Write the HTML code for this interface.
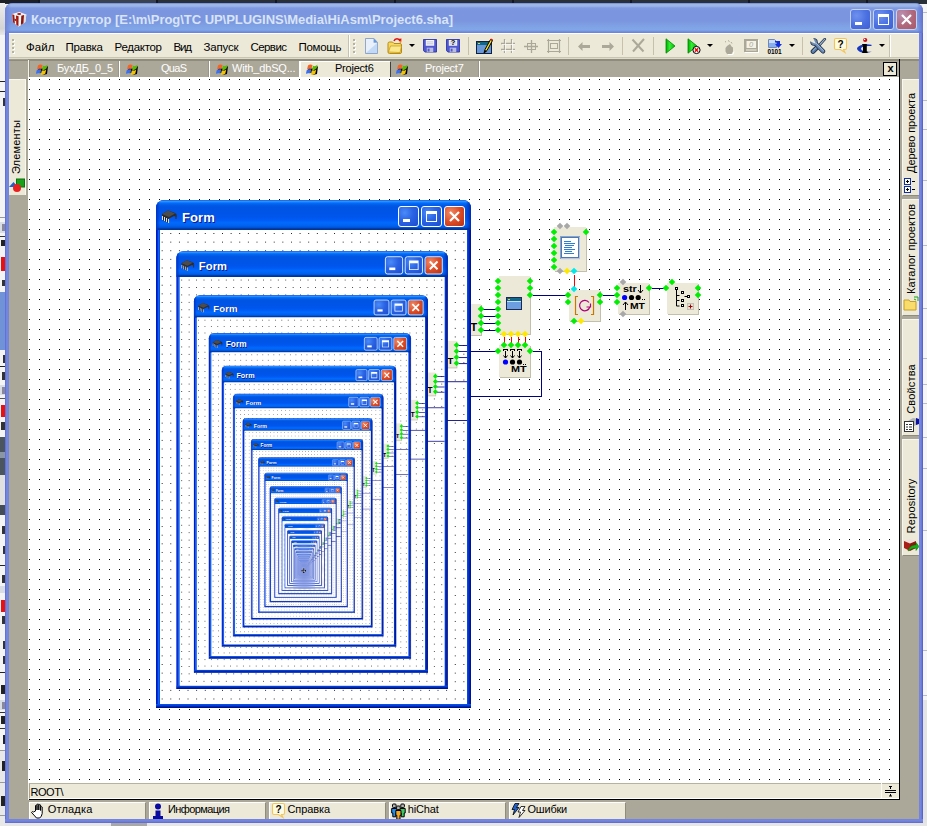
<!DOCTYPE html><html><head><meta charset="utf-8"><title>HiAsm</title><style>
*{box-sizing:border-box;margin:0;padding:0}
html,body{width:927px;height:826px;overflow:hidden;background:#f4f4f4}
body{position:relative;font-family:"Liberation Sans",sans-serif;font-size:11px;color:#000}
.a{position:absolute}
.dots{background-color:#fff;background-image:linear-gradient(90deg,transparent 0,transparent 1px,#fff 1px,#fff 10px),linear-gradient(180deg,#000 0,#000 1px,#fff 1px,#fff 10px);background-size:10px 10px}
.scene{position:absolute;left:0;top:0;width:927px;height:826px}
.sub{position:absolute;left:-160px;top:-230px;width:927px;height:826px;transform-origin:303.5px 570.6px;transform:scale(0.862)}
.fw{position:absolute;left:156px;top:200px;width:315px;height:508px;border-radius:8px 8px 0 0;background:linear-gradient(90deg,#0019c8 0,#0019c8 1px,#0032dc 1px,#0032dc 2px,#1264f0 2px,#1264f0 3px,#0a52e6 3px,#0a52e6 4px,#0a44e2 4px,#0a44e2 312px,#0034d2 312px,#0034d2 313px,#0022aa 313px,#0022aa 314px,#00128a 314px);overflow:hidden}
.ft{position:absolute;left:0;top:0;width:315px;height:30px;background:linear-gradient(180deg,#0058ee 0%,#3593ff 4%,#288eff 6%,#127dff 8%,#036ffc 10%,#0262ee 14%,#0057e5 20%,#0054e3 24%,#0055eb 56%,#005bf5 66%,#026afe 76%,#0062ef 86%,#0052d6 92%,#0040ab 94%,#003092 100%)}
.ftl{position:absolute;left:0;top:0;width:4px;height:30px;background:linear-gradient(90deg,#0033c8,rgba(0,60,220,0))}
.ftr{position:absolute;right:0;top:0;width:5px;height:30px;background:linear-gradient(270deg,#0029b0,rgba(0,60,220,0))}
.fb{position:absolute;left:0;top:504px;width:315px;height:4px;background:linear-gradient(180deg,#0a50e8 0,#0a50e8 1px,#0040dc 1px,#0040dc 2px,#0026b4 2px,#0026b4 3px,#00128a 3px)}
.fc{position:absolute;left:160px;top:230px;width:307px;height:474px;overflow:hidden;background:#fff}
.ftx{position:absolute;left:26px;top:10px;font:bold 13px "Liberation Sans",sans-serif;color:#fff;text-shadow:1px 1px 0 #0a1883;letter-spacing:0.1px;white-space:nowrap}
.cb{position:absolute;top:6px;width:21px;height:21px;border:1px solid #fff;border-radius:3px;background:radial-gradient(circle at 30% 30%,#4a8bf8 0,#2a63e4 45%,#1c4ccc 100%)}
.cb.x{background:radial-gradient(circle at 30% 30%,#ef8a66 0,#dc4c27 50%,#b8300f 100%)}
.el{position:absolute;background:#ece9d8;box-shadow:1px 1px 0 #c2bfad}
.w{position:absolute;background:#000080}
.r{position:absolute;background:#f00}
.d{position:absolute;width:6px;height:6px;margin:-3px 0 0 -3px;transform:rotate(45deg) scale(0.78);background:#0e0}
.d.y{background:#ffe800}.d.g{background:#a8a8a8}.d.c{background:#00e8e8}
.tx{position:absolute;white-space:nowrap}
</style></head><body><div class="a" style="left:0;top:0;width:927px;height:4px;background:#2a3038"></div><div class="a" style="left:0;top:0;width:38px;height:3px;background:#1c1f26"></div><div class="a" style="left:38px;top:0;width:2px;height:3px;background:#14181e"></div><div class="a" style="left:156px;top:0;width:2px;height:3px;background:#14181e"></div><div class="a" style="left:275px;top:0;width:2px;height:3px;background:#14181e"></div><div class="a" style="left:394px;top:0;width:2px;height:3px;background:#14181e"></div><div class="a" style="left:512px;top:0;width:2px;height:3px;background:#14181e"></div><div class="a" style="left:630px;top:0;width:2px;height:3px;background:#14181e"></div><div class="a" style="left:748px;top:0;width:2px;height:3px;background:#14181e"></div><div class="a" style="left:866px;top:0;width:2px;height:3px;background:#14181e"></div><div class="a" style="left:40px;top:0;width:116px;height:3px;background:#3a4252"></div><div class="a" style="left:0;top:823px;width:927px;height:3px;background:#e6e6e6"></div><div class="a" style="left:111px;top:823px;width:36px;height:3px;background:#a8a8a8"></div><div class="a" style="left:0;top:4px;width:5px;height:819px;background:#f4f4f4"></div><div class="a" style="left:0;top:3px;width:5px;height:32px;background:linear-gradient(180deg,#ececec,#d4d4d4 80%,#e8e8e8)"></div><div class="a" style="left:0px;top:81px;width:5px;height:1px;background:#222"></div><div class="a" style="left:0px;top:91px;width:5px;height:1px;background:#222"></div><div class="a" style="left:3px;top:98px;width:2px;height:8px;background:#333"></div><div class="a" style="left:0px;top:217px;width:5px;height:1px;background:#999"></div><div class="a" style="left:0px;top:222px;width:5px;height:11px;background:#d8dce4"></div><div class="a" style="left:2px;top:224px;width:3px;height:7px;background:#889"></div><div class="a" style="left:0px;top:236px;width:5px;height:1px;background:#333"></div><div class="a" style="left:1px;top:240px;width:4px;height:6px;background:#222"></div><div class="a" style="left:1px;top:257px;width:4px;height:14px;background:#e81010"></div><div class="a" style="left:2px;top:280px;width:3px;height:6px;background:#333"></div><div class="a" style="left:0px;top:292px;width:5px;height:58px;background:#6f93d6"></div><div class="a" style="left:3px;top:355px;width:2px;height:8px;background:#333"></div><div class="a" style="left:0px;top:366px;width:5px;height:1px;background:#222"></div><div class="a" style="left:2px;top:372px;width:3px;height:8px;background:#333"></div><div class="a" style="left:0px;top:385px;width:5px;height:10px;background:#d8dce4"></div><div class="a" style="left:2px;top:387px;width:3px;height:7px;background:#889"></div><div class="a" style="left:0px;top:398px;width:5px;height:1px;background:#555"></div><div class="a" style="left:1px;top:405px;width:4px;height:12px;background:#e81010"></div><div class="a" style="left:1px;top:422px;width:4px;height:8px;background:#333"></div><div class="a" style="left:0px;top:437px;width:5px;height:38px;background:#4a5560"></div><div class="a" style="left:0px;top:452px;width:5px;height:6px;background:#8a96a4"></div><div class="a" style="left:0px;top:475px;width:5px;height:30px;background:#e0e0e0"></div><div class="a" style="left:0px;top:505px;width:5px;height:10px;background:#444c58"></div><div class="a" style="left:2px;top:526px;width:3px;height:8px;background:#333"></div><div class="a" style="left:3px;top:546px;width:2px;height:8px;background:#333"></div><div class="a" style="left:0px;top:565px;width:5px;height:1px;background:#222"></div><div class="a" style="left:2px;top:575px;width:3px;height:8px;background:#333"></div><div class="a" style="left:0px;top:586px;width:5px;height:7px;background:#d8dce4"></div><div class="a" style="left:1px;top:600px;width:4px;height:12px;background:#e81010"></div><div class="a" style="left:2px;top:616px;width:3px;height:8px;background:#333"></div><div class="a" style="left:3px;top:641px;width:2px;height:8px;background:#333"></div><div class="a" style="left:3px;top:656px;width:2px;height:8px;background:#333"></div><div class="a" style="left:0px;top:672px;width:5px;height:1px;background:#222"></div><div class="a" style="left:1px;top:685px;width:4px;height:9px;background:#222"></div><div class="a" style="left:0px;top:700px;width:5px;height:10px;background:#d8dce4"></div><div class="a" style="left:2px;top:702px;width:3px;height:7px;background:#889"></div><div class="a" style="left:0px;top:712px;width:5px;height:1px;background:#333"></div><div class="a" style="left:1px;top:716px;width:4px;height:8px;background:#222"></div><div class="a" style="left:0px;top:728px;width:5px;height:1px;background:#333"></div><div class="a" style="left:3px;top:735px;width:2px;height:9px;background:#222"></div><div class="a" style="left:0px;top:750px;width:5px;height:76px;background:#e8e8e8"></div><div class="a" style="left:0px;top:750px;width:5px;height:1px;background:#999"></div><div class="a" style="left:2px;top:761px;width:3px;height:10px;background:#222"></div><div class="a" style="left:0px;top:782px;width:5px;height:1px;background:#999"></div><div class="a" style="left:1px;top:796px;width:4px;height:10px;background:#222"></div><div class="a" style="left:0px;top:815px;width:5px;height:1px;background:#999"></div><div class="a" style="left:923px;top:4px;width:4px;height:819px;background:#f6f6f6"></div><div class="a" style="left:923px;top:12px;width:4px;height:1px;background:#b8bcc4"></div><div class="a" style="left:923px;top:100px;width:4px;height:1px;background:#b8bcc4"></div><div class="a" style="left:923px;top:129px;width:4px;height:1px;background:#b8bcc4"></div><div class="a" style="left:923px;top:180px;width:4px;height:1px;background:#b8bcc4"></div><div class="a" style="left:923px;top:245px;width:4px;height:1px;background:#b8bcc4"></div><div class="a" style="left:923px;top:308px;width:4px;height:1px;background:#b8bcc4"></div><div class="a" style="left:923px;top:358px;width:4px;height:1px;background:#b8bcc4"></div><div class="a" style="left:923px;top:384px;width:4px;height:1px;background:#b8bcc4"></div><div class="a" style="left:923px;top:403px;width:4px;height:1px;background:#b8bcc4"></div><div class="a" style="left:923px;top:437px;width:4px;height:1px;background:#b8bcc4"></div><div class="a" style="left:923px;top:468px;width:4px;height:1px;background:#b8bcc4"></div><div class="a" style="left:923px;top:530px;width:4px;height:1px;background:#b8bcc4"></div><div class="a" style="left:923px;top:650px;width:4px;height:1px;background:#b8bcc4"></div><div class="a" style="left:923px;top:695px;width:4px;height:1px;background:#b8bcc4"></div><div class="a" style="left:923px;top:745px;width:4px;height:1px;background:#b8bcc4"></div><div class="a" style="left:923px;top:790px;width:4px;height:1px;background:#b8bcc4"></div><div class="a" style="left:923px;top:815px;width:4px;height:1px;background:#b8bcc4"></div><div class="a" style="left:923px;top:700px;width:4px;height:123px;background:#e4e4e4"></div><div class="a" style="left:5px;top:3px;width:918px;height:820px;border-radius:8px 8px 0 0;background:linear-gradient(90deg,#5563cb 0,#6f80dc 1px,#7488e0 2px,#7284de 4px,#7284de 914px,#7486e0 916px,#6470d4 917px,#4c56c6 918px);overflow:hidden"><div class="a" style="left:0;top:0;width:918px;height:30px;background:linear-gradient(180deg,#6b86db 0,#9db6ea 1.5px,#9db6ea 3px,#7f9ae1 5px,#7b96df 8px,#7b96df 18px,#80a3e5 24px,#81a7e7 27px,#7089da 29px,#6c82d6 30px)"></div><div class="a" style="left:0;top:0;width:6px;height:30px;background:linear-gradient(90deg,#6f84d8,rgba(120,150,225,0))"></div><div class="a" style="left:912px;top:0;width:6px;height:30px;background:linear-gradient(270deg,#6272d0,rgba(120,150,225,0))"></div><div class="a" style="left:0;top:816px;width:918px;height:4px;background:linear-gradient(180deg,#7284de,#7486e0 2px,#6a74d6 3px,#5f68cc 4px)"></div></div><svg class="a" style="left:11.800px;top:11.600px" width="15" height="15" viewBox="0 0 15 15"><path d="M0 2L7.300 0L14.300 2.400L13.400 10.100L6.500 14.500L1.100 10.600z" fill="#f6f2f2"/><path d="M7.300 4.100L14.300 2.400L13.400 10.100L6.500 14.500z" fill="#e4dede"/><path d="M7.300 4.100L9.300 3.600L8.800 13L6.500 14.500z" fill="#fbf8f8"/><ellipse cx="7.200" cy="1.900" rx="2" ry="1" fill="#a01810"/><path d="M0.200 2.300L2.300 2.900L2.900 11.800L1.100 10.600z" fill="#a01810"/><path d="M4 3.400L6.600 4.200L6.400 14.300L4.300 12.800z" fill="#a01810"/><path d="M2.300 6.500L4.200 7.200L4.200 9.200L2.500 8.500z" fill="#a01810"/><path d="M9.300 3.700L12 3L11.400 11.300L8.900 12.900z" fill="#8c140c"/></svg><div class="tx" style="left:31px;top:12px;font:bold 13px/16px 'Liberation Sans',sans-serif;color:#d8e4f8;letter-spacing:-0.045px;">Конструктор [E:\m\Prog\TC UP\PLUGINS\Media\HiAsm\Project6.sha]</div><div class="a" style="left:850px;top:9px;width:21px;height:21px;border:1px solid #c4d2f4;border-radius:3px;background:radial-gradient(circle at 30% 30%,#6f92ee 0,#4a6fe0 55%,#3f5fd2 100%)"><i class="a" style="left:4px;top:12px;width:7px;height:3px;background:#fff"></i></div><div class="a" style="left:873px;top:9px;width:21px;height:21px;border:1px solid #c4d2f4;border-radius:3px;background:radial-gradient(circle at 30% 30%,#6f92ee 0,#4a6fe0 55%,#3f5fd2 100%)"><i class="a" style="left:4px;top:4px;width:11px;height:11px;border:1px solid #fff;border-top-width:3px"></i></div><div class="a" style="left:896px;top:9px;width:21px;height:21px;border:1px solid #c4d2f4;border-radius:3px;background:radial-gradient(circle at 25% 25%,#b98fb0 0,#b0687c 55%,#a85868 100%)"><svg class="a" style="left:0;top:0" width="19" height="19" viewBox="0 0 19 19"><path d="M5 5l9 9M14 5l-9 9" stroke="#fff" stroke-width="2.200"/></svg></div><div class="a" style="left:9px;top:33px;width:910px;height:786px;background:#aca899"></div><div class="a" style="left:9px;top:33px;width:910px;height:26px;background:#ece9d8;border-top:1px solid #fff"></div><div class="a" style="left:9px;top:57px;width:910px;height:1px;background:#c8c5b3"></div><div class="a" style="left:9px;top:58px;width:910px;height:1px;background:#dedbc9"></div><div class="a" style="left:9px;top:59px;width:910px;height:2px;background:#8f8c7d"></div><div class="a" style="left:9px;top:59px;width:19px;height:1px;background:#a09d8e"></div><i class="a" style="left:12px;top:39px;width:2px;height:2px;background:#b5b29f;box-shadow:1px 1px 0 #fff"></i><i class="a" style="left:12px;top:43px;width:2px;height:2px;background:#b5b29f;box-shadow:1px 1px 0 #fff"></i><i class="a" style="left:12px;top:47px;width:2px;height:2px;background:#b5b29f;box-shadow:1px 1px 0 #fff"></i><i class="a" style="left:12px;top:51px;width:2px;height:2px;background:#b5b29f;box-shadow:1px 1px 0 #fff"></i><i class="a" style="left:353px;top:39px;width:2px;height:2px;background:#b5b29f;box-shadow:1px 1px 0 #fff"></i><i class="a" style="left:353px;top:43px;width:2px;height:2px;background:#b5b29f;box-shadow:1px 1px 0 #fff"></i><i class="a" style="left:353px;top:47px;width:2px;height:2px;background:#b5b29f;box-shadow:1px 1px 0 #fff"></i><i class="a" style="left:353px;top:51px;width:2px;height:2px;background:#b5b29f;box-shadow:1px 1px 0 #fff"></i><div class="tx" style="left:26px;top:40px;font:11.5px/14px 'Liberation Sans',sans-serif;color:#000;letter-spacing:0.076px;">Файл</div><div class="tx" style="left:65.5px;top:40px;font:11.5px/14px 'Liberation Sans',sans-serif;color:#000;letter-spacing:-0.269px;">Правка</div><div class="tx" style="left:114.5px;top:40px;font:11.5px/14px 'Liberation Sans',sans-serif;color:#000;letter-spacing:-0.286px;">Редактор</div><div class="tx" style="left:173.5px;top:40px;font:11.5px/14px 'Liberation Sans',sans-serif;color:#000;letter-spacing:-1.152px;">Вид</div><div class="tx" style="left:203.5px;top:40px;font:11.5px/14px 'Liberation Sans',sans-serif;color:#000;letter-spacing:-0.194px;">Запуск</div><div class="tx" style="left:250.5px;top:40px;font:11.5px/14px 'Liberation Sans',sans-serif;color:#000;letter-spacing:-0.576px;">Сервис</div><div class="tx" style="left:298.5px;top:40px;font:11.5px/14px 'Liberation Sans',sans-serif;color:#000;letter-spacing:-0.283px;">Помощь</div><i class="a" style="left:348px;top:35px;width:1px;height:22px;background:#c5c2b2"></i><i class="a" style="left:349px;top:35px;width:1px;height:22px;background:#fff"></i><i class="a" style="left:468px;top:37px;width:1px;height:18px;background:#c5c1ad"></i><i class="a" style="left:568px;top:37px;width:1px;height:18px;background:#c5c1ad"></i><i class="a" style="left:622px;top:37px;width:1px;height:18px;background:#c5c1ad"></i><i class="a" style="left:653px;top:37px;width:1px;height:18px;background:#c5c1ad"></i><i class="a" style="left:802px;top:37px;width:1px;height:18px;background:#c5c1ad"></i><i class="a" style="left:889px;top:35px;width:1px;height:22px;background:#c5c2b2"></i><i class="a" style="left:890px;top:35px;width:1px;height:22px;background:#fff"></i><svg class="a" style="left:365px;top:38px" width="13" height="16" viewBox="0 0 14 16" preserveAspectRatio="none"><path d="M.5.500h9l4 4v11H.5z" fill="#e8f0fb" stroke="#8aa0c8"/><path d="M1 15L13 5v10z" fill="#b8d4f4" opacity=".8"/><path d="M9.500.500v4h4z" fill="#5a9ae8" stroke="#8aa0c8" stroke-width=".5"/></svg><svg class="a" style="left:387px;top:37px" width="17" height="17" viewBox="0 0 17 17"><path d="M7 4c1-3 5-3 6 0" stroke="#e01010" stroke-width="1.500" fill="none"/><path d="M11 2l3.500-.5-.5 4z" fill="#e01010"/><path d="M12 5l2 1 .500-3" fill="#f08020"/><path d="M1 6.500q0-1.500 1.500-1.500h3l1.500 1.500h6q1.500 0 1.500 1.500V15q0 1.500-1.500 1.500h-10.500Q1 16.500 1 15z" fill="#f6d860" stroke="#b88a10"/><path d="M1.500 15l2-6h11l-1.500 6.500z" fill="#fbe88c" stroke="#b88a10" stroke-width=".6"/></svg><svg class="a" style="left:408.5px;top:44px" width="6" height="3" viewBox="0 0 6 3"><path d="M0 0h6L3 3z"/></svg><svg class="a" style="left:707px;top:44px" width="6" height="3" viewBox="0 0 6 3"><path d="M0 0h6L3 3z"/></svg><svg class="a" style="left:789px;top:44px" width="6" height="3" viewBox="0 0 6 3"><path d="M0 0h6L3 3z"/></svg><svg class="a" style="left:879px;top:44px" width="6" height="3" viewBox="0 0 6 3"><path d="M0 0h6L3 3z"/></svg><svg class="a" style="left:423px;top:39px" width="14" height="13.500" viewBox="0 0 15 14" preserveAspectRatio="none"><path d="M.5.500h14v13H2L.5 12z" fill="#5058d0" stroke="#3038a8"/><rect x="3" y="1" width="9" height="6" fill="#f4f4fa"/><path d="M4 3h7M4 5h7" stroke="#c0c4d8"/><rect x="4" y="9" width="7" height="4.500" fill="#b8bce0"/><rect x="5" y="10" width="2" height="3" fill="#5058d0"/></svg><svg class="a" style="left:446px;top:39px" width="14" height="13.500" viewBox="0 0 15 14" preserveAspectRatio="none"><path d="M.5.500h14v13H2L.5 12z" fill="#5058d0" stroke="#3038a8"/><rect x="3" y="1" width="9" height="6" fill="#f4f4fa"/><path d="M4 3h7M4 5h7" stroke="#c0c4d8"/><rect x="4" y="9" width="7" height="4.500" fill="#b8bce0"/><rect x="5" y="10" width="2" height="3" fill="#5058d0"/><text x="5" y="6.500" font-size="8" font-weight="bold" font-family="Liberation Sans, sans-serif">?</text></svg><svg class="a" style="left:476px;top:38px" width="17" height="16" viewBox="0 0 17 16"><rect x=".5" y="3.500" width="15" height="12" fill="#6898d8" stroke="#102040"/><rect x="1" y="4" width="14" height="3" fill="#106888"/><rect x="2" y="5" width="2" height="1" fill="#e8d040"/><path d="M8 15l1-3.500L14.500 1.500l2 1L11 12.500z" fill="#f8e020" stroke="#000" stroke-width="1"/><path d="M14 1.500l1-1 2 1-.800 1.300z" fill="#e01010"/><path d="M8 15l1-3 1.800 1.200z" fill="#000"/></svg><svg class="a" style="left:500px;top:38px" width="16" height="16" viewBox="0 0 16 16"><path d="M4.500 1v14M11.500 1v14M1 5.500h14M1 11.500h14" stroke="#aca899" stroke-width="1.300" fill="none"/><path d="M5.500 2v13M12.500 2v13M2 6.500h13M2 12.500h13" stroke="#fff" stroke-width=".8" fill="none" opacity=".9"/></svg><svg class="a" style="left:523px;top:38px" width="16" height="16" viewBox="0 0 16 16"><path d="M8.500 2v13M1 8.500h14" stroke="#aca899" stroke-width="1.300" fill="none"/><rect x="4.500" y="5.500" width="8" height="6" fill="none" stroke="#aca899"/></svg><svg class="a" style="left:546px;top:38px" width="16" height="16" viewBox="0 0 16 16"><path d="M2.500 1v14M13.500 1v14M1 2.500h14M1 13.500h14" stroke="#aca899" stroke-width="1.200" fill="none"/><rect x="4.500" y="5.500" width="7" height="5" fill="none" stroke="#aca899"/></svg><svg class="a" style="left:578px;top:42px" width="12" height="9" viewBox="0 0 12 9"><path d="M0 4.500L4.500 0v3H12v3H4.500v3z" fill="#aca899"/></svg><svg class="a" style="left:602px;top:42px" width="12" height="9" viewBox="0 0 12 9"><path d="M12 4.500L7.500 0v3H0v3h7.500v3z" fill="#aca899"/></svg><svg class="a" style="left:631px;top:38px" width="15" height="15" viewBox="0 0 15 15"><path d="M1.500 1.500l11 12M13 1L2 13.500" stroke="#aca899" stroke-width="2" fill="none"/></svg><svg class="a" style="left:665px;top:38px" width="11" height="16" viewBox="0 0 11 16"><defs><linearGradient id="pg" x1="0" x2="1"><stop offset="0" stop-color="#0a0"/><stop offset=".4" stop-color="#3e3"/><stop offset="1" stop-color="#0b0"/></linearGradient></defs><path d="M1 .800L10 8 1 15.200z" fill="url(#pg)" stroke="#080" stroke-width=".8"/></svg><svg class="a" style="left:687px;top:38px" width="15" height="17" viewBox="0 0 15 17"><path d="M1 .800L10 8 1 15.200z" fill="url(#pg)" stroke="#080" stroke-width=".8"/><circle cx="9.500" cy="12" r="3.600" fill="#fff" stroke="#000" stroke-width="1"/><path d="M7.800 10.300l3.400 3.400M11.200 10.300l-3.400 3.400" stroke="#e00" stroke-width="1.300"/></svg><svg class="a" style="left:723px;top:39px" width="12" height="16" viewBox="0 0 12 16"><path d="M2 2.500l1 .5M5 1.500l1.500 1M8 3l1 1.500" stroke="#aca899"/><path d="M4 7l3-2 1.500 2.500 1.500 1v4L8.500 15H4L2.500 12.500V9z" fill="#aca899"/><path d="M5 15.500h5l1-3" stroke="#fff" fill="none"/></svg><svg class="a" style="left:744px;top:39px" width="16" height="15" viewBox="0 0 16 15"><rect x="1" y="1" width="14" height="13" fill="#fff"/><rect x="0" y="0" width="14" height="13" fill="#aca899"/><rect x="2.500" y="2" width="9.500" height="7" fill="#f4f2e6"/><rect x="2" y="10.500" width="10.500" height="1" fill="#f4f2e6"/><text x="5" y="8.300" font-size="7.500" font-style="italic" font-family="Liberation Sans, sans-serif" fill="#aca899">0</text></svg><svg class="a" style="left:767px;top:38px" width="17" height="17" viewBox="0 0 17 17"><path d="M1.500 1.500h6l2 2v6h-8z" fill="#c8dcf8" stroke="#7088b8"/><path d="M2 5h7v4H2z" fill="#88b0f0"/><path d="M8 3h5v3h2l-3.500 4L8 6h2V4.500H8z" fill="#1030e0"/><text x="0.500" y="16" font-size="6.500" font-weight="bold" font-family="Liberation Sans, sans-serif" textLength="14">0101</text></svg><svg class="a" style="left:810px;top:38px" width="17" height="16" viewBox="0 0 17 16"><g stroke-linecap="round"><path d="M14.800 1.200L9 7.500" stroke="#203048" stroke-width="2.600"/><path d="M14.800 1.200L9 7.500" stroke="#9ab4d0" stroke-width="1.200"/><path d="M7.500 9L3 13.500" stroke="#203048" stroke-width="4.600"/><path d="M7.500 9L3 13.500" stroke="#5a7ca8" stroke-width="3"/><path d="M6.500 9.200L3 12.600" stroke="#9cb8d8" stroke-width="1"/><path d="M5.500 5.500L13 13.300" stroke="#203048" stroke-width="4.400"/><circle cx="4" cy="4" r="3.700" fill="#203048" stroke="none"/><circle cx="4" cy="4" r="2.900" fill="#6c8cb8" stroke="none"/><path d="M5.500 5.500L13 13.300" stroke="#6c8cb8" stroke-width="2.800"/><path d="M6 5L13.300 12.500" stroke="#a8c0dc" stroke-width=".9"/></g><path d="M4.200 4.200L0.500 2.500L2.500 0.500z" fill="#ece9d8" stroke="#ece9d8" stroke-width="1.600"/></svg><svg class="a" style="left:833px;top:37px" width="15" height="17" viewBox="0 0 15 17"><path d="M3 1.500h9q1.500 0 1.500 1.500v8q0 1.500-1.500 1.500h-1.500l1.500 3-4.500-3H3q-1.500 0-1.500-1.500V3q0-1.500 1.500-1.500z" fill="#fffbe2" stroke="#f2c45c" stroke-width="1.100"/><text x="4.500" y="11" font-size="10" font-weight="bold" font-family="Liberation Sans, sans-serif">?</text></svg><svg class="a" style="left:856px;top:37px" width="17" height="18" viewBox="0 0 17 18"><path d="M15.500 7.800C9 6 1.500 8.300 1 11.500C1.500 15.200 9 17.200 15.800 14.800C11.500 15 5.200 14.200 5 11.700C5 9.600 10.500 8.600 15.500 9z" fill="#1838c0"/><path d="M7 7h3.800v8H7z" fill="#000"/><path d="M6.200 7h2v1.200h-2zM6.200 14.500h5.400V16H6.200z" fill="#000"/><circle cx="9.200" cy="3" r="2.100" fill="#c8101c"/><circle cx="8.600" cy="2.400" r=".7" fill="#fff"/></svg><div class="a" style="left:28px;top:60px;width:1px;height:740px;background:#f4f2e8"></div><div class="a" style="left:29px;top:61px;width:870px;height:16px;background:#aca899"></div><i class="a" style="left:119px;top:61px;width:1px;height:16px;background:#fff"></i><i class="a" style="left:118px;top:61px;width:1px;height:16px;background:#9a9788"></i><i class="a" style="left:209px;top:61px;width:1px;height:16px;background:#fff"></i><i class="a" style="left:208px;top:61px;width:1px;height:16px;background:#9a9788"></i><i class="a" style="left:479px;top:61px;width:1px;height:16px;background:#fff"></i><i class="a" style="left:478px;top:61px;width:1px;height:16px;background:#9a9788"></i><i class="a" style="left:29px;top:61px;width:1px;height:16px;background:#8f8c7d"></i><div class="a" style="left:299px;top:61px;width:92px;height:16px;background:#ece9d8;border-left:2px solid #fff;border-top:1px solid #fff;border-right:1px solid #404040"></div><svg class="a" style="left:36px;top:64px" width="13" height="12" viewBox="0 0 13 12"><path d="M1.5 8.500l1-4.500 4.500.5-1 4.500z" fill="#000"/><path d="M6.500 11l1-5 4.500-4-1 8z" fill="#000"/><path d="M2 1.500c1.500-1.500 3.500-1 4.500-.5l-1 4c-1.500-.5-3-.5-4.500.5z" fill="#f26522"/><path d="M7 1.800c1.500.8 3 .3 4.500-1.300l-1 4c-1.500 1.500-3 1.500-4.500 1z" fill="#5cb800"/><path d="M.8 6c1.500-1 3-1 4.500-.5l-1 4c-1.500-.5-3-.5-4.500.5z" fill="#3a6ff0"/><path d="M5.800 6.500c1.500.6 3 .5 4.500-1l-1 4c-1.500 1.500-3 1.500-4.500 1z" fill="#f5c400"/></svg><div class="tx" style="left:57px;top:62px;font:11px/13px 'Liberation Sans',sans-serif;color:#fff;letter-spacing:-0.139px;">БухДБ_0_5</div><svg class="a" style="left:126px;top:64px" width="13" height="12" viewBox="0 0 13 12"><path d="M1.5 8.500l1-4.500 4.500.5-1 4.500z" fill="#000"/><path d="M6.500 11l1-5 4.500-4-1 8z" fill="#000"/><path d="M2 1.500c1.500-1.500 3.500-1 4.500-.5l-1 4c-1.500-.5-3-.5-4.500.5z" fill="#f26522"/><path d="M7 1.800c1.500.8 3 .3 4.500-1.300l-1 4c-1.500 1.500-3 1.500-4.500 1z" fill="#5cb800"/><path d="M.8 6c1.500-1 3-1 4.500-.5l-1 4c-1.500-.5-3-.5-4.500.5z" fill="#3a6ff0"/><path d="M5.800 6.500c1.500.6 3 .5 4.500-1l-1 4c-1.500 1.500-3 1.500-4.500 1z" fill="#f5c400"/></svg><div class="tx" style="left:161px;top:62px;font:11px/13px 'Liberation Sans',sans-serif;color:#fff;letter-spacing:-0.709px;">QuaS</div><svg class="a" style="left:216px;top:64px" width="13" height="12" viewBox="0 0 13 12"><path d="M1.5 8.500l1-4.500 4.500.5-1 4.500z" fill="#000"/><path d="M6.500 11l1-5 4.500-4-1 8z" fill="#000"/><path d="M2 1.500c1.500-1.500 3.500-1 4.500-.5l-1 4c-1.500-.5-3-.5-4.500.5z" fill="#f26522"/><path d="M7 1.800c1.500.8 3 .3 4.500-1.300l-1 4c-1.500 1.500-3 1.500-4.500 1z" fill="#5cb800"/><path d="M.8 6c1.500-1 3-1 4.500-.5l-1 4c-1.500-.5-3-.5-4.500.5z" fill="#3a6ff0"/><path d="M5.800 6.500c1.500.6 3 .5 4.500-1l-1 4c-1.500 1.500-3 1.500-4.500 1z" fill="#f5c400"/></svg><div class="tx" style="left:232px;top:62px;font:11px/13px 'Liberation Sans',sans-serif;color:#fff;letter-spacing:-0.174px;">With_dbSQ...</div><svg class="a" style="left:306px;top:64px" width="13" height="12" viewBox="0 0 13 12"><path d="M1.5 8.500l1-4.500 4.500.5-1 4.500z" fill="#000"/><path d="M6.500 11l1-5 4.500-4-1 8z" fill="#000"/><path d="M2 1.500c1.500-1.500 3.500-1 4.500-.5l-1 4c-1.500-.5-3-.5-4.500.5z" fill="#f26522"/><path d="M7 1.800c1.500.8 3 .3 4.500-1.300l-1 4c-1.500 1.500-3 1.500-4.500 1z" fill="#5cb800"/><path d="M.8 6c1.500-1 3-1 4.500-.5l-1 4c-1.500-.5-3-.5-4.500.5z" fill="#3a6ff0"/><path d="M5.800 6.500c1.500.6 3 .5 4.500-1l-1 4c-1.500 1.500-3 1.500-4.500 1z" fill="#f5c400"/></svg><div class="tx" style="left:335px;top:62px;font:11px/13px 'Liberation Sans',sans-serif;color:#000;letter-spacing:-0.229px;">Project6</div><svg class="a" style="left:396px;top:64px" width="13" height="12" viewBox="0 0 13 12"><path d="M1.5 8.500l1-4.500 4.500.5-1 4.500z" fill="#000"/><path d="M6.500 11l1-5 4.500-4-1 8z" fill="#000"/><path d="M2 1.500c1.500-1.500 3.500-1 4.500-.5l-1 4c-1.500-.5-3-.5-4.500.5z" fill="#f26522"/><path d="M7 1.800c1.500.8 3 .3 4.500-1.300l-1 4c-1.500 1.500-3 1.500-4.500 1z" fill="#5cb800"/><path d="M.8 6c1.500-1 3-1 4.500-.5l-1 4c-1.500-.5-3-.5-4.500.5z" fill="#3a6ff0"/><path d="M5.800 6.500c1.500.6 3 .5 4.500-1l-1 4c-1.500 1.500-3 1.500-4.500 1z" fill="#f5c400"/></svg><div class="tx" style="left:425px;top:62px;font:11px/13px 'Liberation Sans',sans-serif;color:#fff;letter-spacing:-0.229px;">Project7</div><div class="a" style="left:883px;top:62px;width:14px;height:14px;background:#ece9d8;border:1px solid #000"></div><div class="tx" style="left:887.5px;top:62px;font:bold 11px/13px 'Liberation Sans',sans-serif;color:#000;letter-spacing:0.000px;">x</div><div class="a" style="left:899px;top:59px;width:1px;height:741px;background:#000"></div><div class="a" style="left:29px;top:799px;width:871px;height:1px;background:#000"></div><div class="a" style="left:9px;top:79px;width:17px;height:116px;background:#ece9d8;border-right:1px solid #f8f7f0;border-top:1px solid #f8f7f0"></div><div class="a" style="left:15.5px;top:146.5px;width:0;height:0"><div class="tx" style="left:-80px;top:-7px;width:160px;height:14px;text-align:center;transform:rotate(-90deg);font:11px/14px 'Liberation Sans',sans-serif;color:#000;letter-spacing:0.175px">Элементы</div></div><svg class="a" style="left:9px;top:178px" width="17" height="15" viewBox="0 0 17 15"><rect x="7.500" y="1" width="8" height="8" fill="#18a018" stroke="#0a700a"/><path d="M0 9l4.500-5 4.500 5z" fill="#1860d0"/><circle cx="8" cy="10" r="4" fill="#e82020"/></svg><div class="a" style="left:902px;top:79px;width:17px;height:117px;background:#ece9d8;border-left:1px solid #f8f7f0;border-top:1px solid #f8f7f0;border-bottom:1px solid #8f8c7d"></div><div class="a" style="left:910.5px;top:133px;width:0;height:0"><div class="tx" style="left:-80px;top:-7px;width:160px;height:14px;text-align:center;transform:rotate(-90deg);font:11px/14px 'Liberation Sans',sans-serif;color:#000;letter-spacing:-0.075px">Дерево проекта</div></div><div class="a" style="left:902px;top:199px;width:17px;height:117px;background:#ece9d8;border-left:1px solid #f8f7f0;border-top:1px solid #f8f7f0;border-bottom:1px solid #8f8c7d"></div><div class="a" style="left:910.5px;top:248.5px;width:0;height:0"><div class="tx" style="left:-80px;top:-7px;width:160px;height:14px;text-align:center;transform:rotate(-90deg);font:11px/14px 'Liberation Sans',sans-serif;color:#000;letter-spacing:0.056px">Каталог проектов</div></div><div class="a" style="left:902px;top:319px;width:17px;height:117px;background:#ece9d8;border-left:1px solid #f8f7f0;border-top:1px solid #f8f7f0;border-bottom:1px solid #8f8c7d"></div><div class="a" style="left:910.5px;top:388.7px;width:0;height:0"><div class="tx" style="left:-80px;top:-7px;width:160px;height:14px;text-align:center;transform:rotate(-90deg);font:11px/14px 'Liberation Sans',sans-serif;color:#000;letter-spacing:0.157px">Свойства</div></div><div class="a" style="left:902px;top:439px;width:17px;height:117px;background:#ece9d8;border-left:1px solid #f8f7f0;border-top:1px solid #f8f7f0;border-bottom:1px solid #8f8c7d"></div><div class="a" style="left:910.5px;top:506.4px;width:0;height:0"><div class="tx" style="left:-80px;top:-7px;width:160px;height:14px;text-align:center;transform:rotate(-90deg);font:11px/14px 'Liberation Sans',sans-serif;color:#000;letter-spacing:0.236px">Repository</div></div><svg class="a" style="left:903px;top:177px" width="14" height="16" viewBox="0 0 14 16"><g fill="#fff" stroke="#1030a0"><rect x="1.500" y="1.500" width="6" height="6"/><rect x="1.500" y="9.500" width="6" height="6"/></g><path d="M3 4.500h3M4.500 3v3M3 12.500h3M4.500 11v3M9 4.500h3M9 12.500h3" stroke="#000"/></svg><svg class="a" style="left:903px;top:296px" width="16" height="16" viewBox="0 0 16 16"><path d="M1 4h5l1 1.500h6V14H1z" fill="#f8dc6c" stroke="#c8a020"/><path d="M11 1h4v4M11 3l2 1" stroke="#18a018" fill="none"/></svg><svg class="a" style="left:903px;top:417px" width="16" height="16" viewBox="0 0 16 16"><path d="M5 4l5-3 5 1v5l-4 2z" fill="#b0b4bc"/><path d="M13 1l3 1v5l-3 1z" fill="#1010a0"/><rect x="1.500" y="4.500" width="9" height="10" fill="#fff" stroke="#333"/><path d="M3 7.500h2M6 7.500h3M3 10h2M6 10h3M3 12.500h2M6 12.500h3" stroke="#333"/></svg><svg class="a" style="left:903px;top:538px" width="16" height="16" viewBox="0 0 16 16"><path d="M1 3l6-2 6 2-6 2.500z" fill="#f0e0dc"/><path d="M1 3l6 2.500V13L1 10z" fill="#a82018"/><path d="M7 5.500L13 3v7l-6 3z" fill="#8c1810"/><path d="M5 13c1-4 4-6 8-6V4.500l3 4-3 4V10c-3 0-5 1-8 3z" fill="#18b018" stroke="#0a700a" stroke-width=".5"/></svg><div class="a" style="left:29px;top:783px;width:870px;height:16px;background:#ece9d8;border-top:1px solid #b5b2a0;border-bottom:1px solid #fff;border-left:1px solid #a8a595"></div><div class="a" style="left:881px;top:783px;width:1px;height:15px;background:#fbfaf4"></div><div class="tx" style="left:30.5px;top:786px;font:11px/13px 'Liberation Sans',sans-serif;color:#000;letter-spacing:-0.458px;">ROOT\</div><svg class="a" style="left:884px;top:785px" width="13" height="12" viewBox="0 0 13 12"><path d="M1 5.500h11M1 7.500h11M5 1.500h3M6.500 1.500v2.500M6.500 9v2M5 11h3" stroke="#000" fill="none"/></svg><div class="a" style="left:29px;top:802px;width:117px;height:17px;background:#ece9d8;border-left:1px solid #fff;border-top:1px solid #fff;border-right:1px solid #8f8c7d"></div><div class="tx" style="left:47.7px;top:803px;font:11px/13px 'Liberation Sans',sans-serif;color:#000;letter-spacing:0.187px;">Отладка</div><div class="a" style="left:149px;top:802px;width:117px;height:17px;background:#ece9d8;border-left:1px solid #fff;border-top:1px solid #fff;border-right:1px solid #8f8c7d"></div><div class="tx" style="left:168px;top:803px;font:11px/13px 'Liberation Sans',sans-serif;color:#000;letter-spacing:-0.594px;">Информация</div><div class="a" style="left:269px;top:802px;width:117px;height:17px;background:#ece9d8;border-left:1px solid #fff;border-top:1px solid #fff;border-right:1px solid #8f8c7d"></div><div class="tx" style="left:287.4px;top:803px;font:11px/13px 'Liberation Sans',sans-serif;color:#000;letter-spacing:-0.075px;">Справка</div><div class="a" style="left:389px;top:802px;width:117px;height:17px;background:#ece9d8;border-left:1px solid #fff;border-top:1px solid #fff;border-right:1px solid #8f8c7d"></div><div class="tx" style="left:407.8px;top:803px;font:11px/13px 'Liberation Sans',sans-serif;color:#000;letter-spacing:-0.159px;">hiChat</div><div class="a" style="left:509px;top:802px;width:117px;height:17px;background:#ece9d8;border-left:1px solid #fff;border-top:1px solid #fff;border-right:1px solid #8f8c7d"></div><div class="tx" style="left:527.5px;top:803px;font:11px/13px 'Liberation Sans',sans-serif;color:#000;letter-spacing:-0.216px;">Ошибки</div><svg class="a" style="left:30px;top:802px" width="17" height="17" viewBox="0 0 17 17"><path d="M5.500 9V3.500q1-1 1.500 0V8 2.500q1-1 1.800 0V8 3q1-1 1.800 0V8.500 5q1-.8 1.600 0v6.500q-.5 3-2.500 4.500H6.500Q4 13 1.500 10.500q.5-1.500 2-.5z" fill="#fff" stroke="#000" stroke-width="1"/></svg><svg class="a" style="left:152px;top:803px" width="12" height="16" viewBox="0 0 12 16"><circle cx="6" cy="3.500" r="3" fill="#0a0aa0"/><path d="M3.500 7.500h5V13H11v3H1v-3h2.500z" fill="#0a0aa0"/></svg><svg class="a" style="left:271px;top:802px" width="15" height="17" viewBox="0 0 15 17"><path d="M3 1.500h9q1.500 0 1.500 1.500v8q0 1.500-1.500 1.500h-1.500l1.500 3-4.500-3H3q-1.500 0-1.500-1.500V3q0-1.500 1.500-1.500z" fill="#fffbe2" stroke="#f2c45c" stroke-width="1.100"/><text x="4.500" y="11" font-size="10" font-weight="bold" font-family="Liberation Sans, sans-serif">?</text></svg><svg class="a" style="left:391px;top:802.500px" width="15" height="17" viewBox="0 0 15 17"><g stroke="#000" stroke-width="1"><rect x="1.500" y="1" width="3.600" height="3.600" rx="1" fill="#b4b4b4"/><rect x="9.800" y="1" width="3.600" height="3.600" rx="1" fill="#b4b4b4"/><path d="M.700 5.500h5.200v4.500H4.800v3.800H1.800V10H.700z" fill="#1e8ff0"/><path d="M9 5.500h5.200v4.500H13.200v3.800H10.200V10H9z" fill="#3cc864"/><rect x="5.600" y="3" width="3.600" height="3.600" rx="1" fill="#b4b4b4"/><path d="M4.800 7.500h5.200v4.800H9v4H5.800v-4H4.800z" fill="#f5a623"/></g></svg><svg class="a" style="left:511px;top:803px" width="15" height="15" viewBox="0 0 15 15"><path d="M4 .5h4L5.500 4.500H8L2 12l1.500-5.500H1z" fill="#2060c8" stroke="#000" stroke-width=".8"/><path d="M10 3.500h4l-2.500 4H14L8 14.500 9.500 9H7z" fill="#fff" stroke="#000" stroke-width=".8"/></svg><div class="a" style="left:5px;top:819px;width:918px;height:4px;background:linear-gradient(180deg,#7284de,#7486e0 2px,#6a74d6 3px,#5f68cc 4px)"></div><div class="a" style="left:28px;top:77px;width:871px;height:706px;overflow:hidden"><div class="scene" style="left:-28px;top:-77px"><svg class="a" style="left:28px;top:77px" width="871" height="706" viewBox="28 77 871 706"><defs><pattern id="dp0" x="9.000" y="9.000" width="10" height="10" patternUnits="userSpaceOnUse"><rect width="1.000" height="1.000" fill="#000"/></pattern><pattern id="dp1" x="8.975" y="8.975" width="10" height="10" patternUnits="userSpaceOnUse"><rect width="1.050" height="1.050" fill="#000"/></pattern><pattern id="dp2" x="8.949" y="8.949" width="10" height="10" patternUnits="userSpaceOnUse"><rect width="1.103" height="1.103" fill="#000"/></pattern><pattern id="dp3" x="8.921" y="8.921" width="10" height="10" patternUnits="userSpaceOnUse"><rect width="1.158" height="1.158" fill="#000"/></pattern><pattern id="dp4" x="8.892" y="8.892" width="10" height="10" patternUnits="userSpaceOnUse"><rect width="1.217" height="1.217" fill="#000"/></pattern><pattern id="dp5" x="8.861" y="8.861" width="10" height="10" patternUnits="userSpaceOnUse"><rect width="1.278" height="1.278" fill="#000"/></pattern><pattern id="dp6" x="8.829" y="8.829" width="10" height="10" patternUnits="userSpaceOnUse"><rect width="1.342" height="1.342" fill="#000"/></pattern><pattern id="dp7" x="8.795" y="8.795" width="10" height="10" patternUnits="userSpaceOnUse"><rect width="1.409" height="1.409" fill="#000"/></pattern><pattern id="dp8" x="8.760" y="8.760" width="10" height="10" patternUnits="userSpaceOnUse"><rect width="1.480" height="1.480" fill="#000"/></pattern><pattern id="dp9" x="8.723" y="8.723" width="10" height="10" patternUnits="userSpaceOnUse"><rect width="1.554" height="1.554" fill="#000"/></pattern><pattern id="dp10" x="8.684" y="8.684" width="10" height="10" patternUnits="userSpaceOnUse"><rect width="1.632" height="1.632" fill="#000"/></pattern><pattern id="dp11" x="8.643" y="8.643" width="10" height="10" patternUnits="userSpaceOnUse"><rect width="1.714" height="1.714" fill="#000"/></pattern><pattern id="dp12" x="8.600" y="8.600" width="10" height="10" patternUnits="userSpaceOnUse"><rect width="1.800" height="1.800" fill="#000"/></pattern><pattern id="dp13" x="8.600" y="8.600" width="10" height="10" patternUnits="userSpaceOnUse"><rect width="1.800" height="1.800" fill="#000"/></pattern><pattern id="dp14" x="8.600" y="8.600" width="10" height="10" patternUnits="userSpaceOnUse"><rect width="1.800" height="1.800" fill="#000"/></pattern><pattern id="dp15" x="8.600" y="8.600" width="10" height="10" patternUnits="userSpaceOnUse"><rect width="1.800" height="1.800" fill="#000"/></pattern><pattern id="dp16" x="8.600" y="8.600" width="10" height="10" patternUnits="userSpaceOnUse"><rect width="1.800" height="1.800" fill="#000"/></pattern><pattern id="dp17" x="8.600" y="8.600" width="10" height="10" patternUnits="userSpaceOnUse"><rect width="1.800" height="1.800" fill="#000"/></pattern><pattern id="dp18" x="8.600" y="8.600" width="10" height="10" patternUnits="userSpaceOnUse"><rect width="1.800" height="1.800" fill="#000"/></pattern><pattern id="dp19" x="8.600" y="8.600" width="10" height="10" patternUnits="userSpaceOnUse"><rect width="1.800" height="1.800" fill="#000"/></pattern><pattern id="dp20" x="8.600" y="8.600" width="10" height="10" patternUnits="userSpaceOnUse"><rect width="1.800" height="1.800" fill="#000"/></pattern><pattern id="dp21" x="8.600" y="8.600" width="10" height="10" patternUnits="userSpaceOnUse"><rect width="1.800" height="1.800" fill="#000"/></pattern><pattern id="dp22" x="8.600" y="8.600" width="10" height="10" patternUnits="userSpaceOnUse"><rect width="1.800" height="1.800" fill="#000"/></pattern><pattern id="dp23" x="8.600" y="8.600" width="10" height="10" patternUnits="userSpaceOnUse"><rect width="1.800" height="1.800" fill="#000"/></pattern><pattern id="dp24" x="8.600" y="8.600" width="10" height="10" patternUnits="userSpaceOnUse"><rect width="1.800" height="1.800" fill="#000"/></pattern><pattern id="dp25" x="8.600" y="8.600" width="10" height="10" patternUnits="userSpaceOnUse"><rect width="1.800" height="1.800" fill="#000"/></pattern><pattern id="dp26" x="8.600" y="8.600" width="10" height="10" patternUnits="userSpaceOnUse"><rect width="1.800" height="1.800" fill="#000"/></pattern><pattern id="dp27" x="8.600" y="8.600" width="10" height="10" patternUnits="userSpaceOnUse"><rect width="1.800" height="1.800" fill="#000"/></pattern><pattern id="dp28" x="8.600" y="8.600" width="10" height="10" patternUnits="userSpaceOnUse"><rect width="1.800" height="1.800" fill="#000"/></pattern><pattern id="dp29" x="8.600" y="8.600" width="10" height="10" patternUnits="userSpaceOnUse"><rect width="1.800" height="1.800" fill="#000"/></pattern><pattern id="dp30" x="8.600" y="8.600" width="10" height="10" patternUnits="userSpaceOnUse"><rect width="1.800" height="1.800" fill="#000"/></pattern></defs><rect x="28" y="77" width="871" height="706" fill="#fff"/><rect x="28" y="77" width="871" height="706" fill="url(#dp0)"/></svg><div class="el" style="left:452px;top:304px;width:29px;height:31px"></div><div class="tx" style="left:470.5px;top:321px;font:bold 11px 'Liberation Sans',sans-serif">T</div><i class="w" style="left:483px;top:309.00px;width:14px;height:1.00px"></i><i class="d " style="left:480.5px;top:308.5px"></i><i class="w" style="left:483px;top:316.00px;width:14px;height:1.00px"></i><i class="d " style="left:480.5px;top:315.5px"></i><i class="w" style="left:483px;top:323.00px;width:14px;height:1.00px"></i><i class="d " style="left:480.5px;top:322.5px"></i><i class="w" style="left:483px;top:330.00px;width:14px;height:1.00px"></i><i class="d " style="left:480.5px;top:329.5px"></i><i class="w" style="left:465px;top:351.00px;width:32px;height:1.00px"></i><i class="w" style="left:465px;top:396.00px;width:77px;height:1.00px"></i><div class="el" style="left:499px;top:276px;width:31px;height:58px"></div><i class="d " style="left:497.5px;top:280.5px"></i><i class="d " style="left:497.5px;top:287.5px"></i><i class="d " style="left:497.5px;top:294.5px"></i><i class="d " style="left:497.5px;top:301.5px"></i><i class="d " style="left:497.5px;top:308.5px"></i><i class="d " style="left:497.5px;top:315.5px"></i><i class="d " style="left:497.5px;top:322.5px"></i><i class="d " style="left:497.5px;top:329.5px"></i><i class="d " style="left:529.5px;top:280.5px"></i><i class="d " style="left:529.5px;top:287.5px"></i><i class="d " style="left:529.5px;top:294.5px"></i><i class="d y" style="left:503.5px;top:333.5px"></i><i class="r" style="left:504px;top:337px;width:1px;height:6px"></i><i class="d y" style="left:510.5px;top:333.5px"></i><i class="r" style="left:511px;top:337px;width:1px;height:6px"></i><i class="d y" style="left:517.5px;top:333.5px"></i><i class="r" style="left:518px;top:337px;width:1px;height:6px"></i><i class="d y" style="left:524.5px;top:333.5px"></i><i class="r" style="left:525px;top:337px;width:1px;height:6px"></i><svg class="a" style="left:506px;top:297px" width="16" height="13" viewBox="0 0 16 13"><rect x="0.5" y="0.5" width="15" height="12" fill="#6d9fe0" stroke="#1a2a55"/><rect x="1" y="1" width="14" height="3" fill="#0d6a8c"/><rect x="2" y="2" width="2" height="1" fill="#e8d040"/><rect x="1" y="4" width="14" height="1" fill="#cfe0f5"/></svg><div class="el" style="left:499px;top:345px;width:31px;height:32px"></div><i class="d " style="left:503.5px;top:344.5px"></i><i class="d " style="left:510.5px;top:344.5px"></i><i class="d " style="left:517.5px;top:344.5px"></i><i class="d " style="left:524.5px;top:344.5px"></i><i class="d " style="left:497.5px;top:350.5px"></i><i class="d " style="left:529.5px;top:350.5px"></i><svg class="a" style="left:501px;top:347px" width="30" height="30" viewBox="0 0 30 30"><g stroke="#000" fill="none" stroke-width="1"><path d="M2.5 2v2M6.5 2v2M2.5 2.5h4M9.5 2v2M13.5 2v2M9.5 2.5h4M16.5 2v2M20.5 2v2M16.5 2.5h4"/><path d="M4.5 4v7M2.5 8.5l2 2.5 2-2.5M11.5 4v7M9.5 8.5l2 2.5 2-2.5M18.5 4v7M16.5 8.5l2 2.5 2-2.5"/></g><circle cx="4.5" cy="15" r="2.6" fill="#00f"/><circle cx="11.5" cy="15" r="2.6" fill="#000"/><circle cx="18.5" cy="15" r="2.6" fill="#000"/><rect x="22" y="17" width="1" height="1"/><rect x="24" y="17" width="1" height="1"/></svg><div class="tx" style="left:510.5px;top:364px;font:bold 9px 'Liberation Sans',sans-serif;transform:scaleX(1.2);transform-origin:0 0">MT</div><i class="w" style="left:533px;top:351px;width:9px;height:1px"></i><i class="w" style="left:541px;top:351px;width:1px;height:46px"></i><i class="w" style="left:533px;top:295px;width:34px;height:1px"></i><div class="el" style="left:554px;top:227px;width:32px;height:44px"></div><i class="d " style="left:553.5px;top:231.5px"></i><i class="d " style="left:553.5px;top:238.5px"></i><i class="d " style="left:553.5px;top:245.5px"></i><i class="d " style="left:553.5px;top:252.5px"></i><i class="d " style="left:553.5px;top:259.5px"></i><i class="d " style="left:553.5px;top:266.5px"></i><i class="d " style="left:585.5px;top:231.5px"></i><i class="d g" style="left:559.5px;top:225.5px"></i><i class="d g" style="left:566.5px;top:225.5px"></i><i class="d g" style="left:559.5px;top:270.5px"></i><i class="d y" style="left:566.5px;top:270.5px"></i><i class="d c" style="left:573.5px;top:270.5px"></i><svg class="a" style="left:560px;top:236px" width="21" height="24" viewBox="0 0 21 24"><rect x="0" y="0" width="20" height="23" fill="#8aa4c8"/><rect x="1" y="1" width="19" height="23" fill="#d8dde8" opacity="0.6"/><rect x="1.5" y="1.5" width="17" height="20" fill="#fff" stroke="#4a78b8"/><g stroke="#2a7fd8" stroke-width="1"><path d="M4 5.5h7M4 7.5h11M5 9.5h9M4 11.5h8M4 13.5h11M5 15.5h7M4 17.5h10"/></g></svg><i class="r" style="left:574px;top:275px;width:1px;height:12px"></i><div class="el" style="left:569px;top:290px;width:31px;height:31px"></div><i class="d " style="left:567.5px;top:294.5px"></i><i class="d " style="left:567.5px;top:301.5px"></i><i class="d " style="left:599.5px;top:294.5px"></i><i class="d " style="left:599.5px;top:301.5px"></i><i class="d c" style="left:573.5px;top:288.5px"></i><i class="d " style="left:573.5px;top:320.5px"></i><i class="d y" style="left:580.5px;top:320.5px"></i><svg class="a" style="left:573px;top:295px" width="24" height="22" viewBox="0 0 24 22"><path d="M5 1.5H2.5V19.5H5M18 1.5h2.5V19.5H18" stroke="#c87800" fill="none" stroke-width="1.2"/><path d="M16 7.5A5.2 5.2 0 1 0 16.8 12" stroke="#b00078" fill="none" stroke-width="1.2"/><path d="M13.5 12h4v-3.5" stroke="#b00078" fill="none" stroke-width="1.2"/></svg><i class="w" style="left:603px;top:295px;width:12px;height:1px"></i><div class="el" style="left:618px;top:283px;width:31px;height:31px"></div><i class="d " style="left:616.5px;top:287.5px"></i><i class="d " style="left:616.5px;top:294.5px"></i><i class="d " style="left:616.5px;top:301.5px"></i><i class="d " style="left:648.5px;top:287.5px"></i><i class="d g" style="left:622.5px;top:281.5px"></i><i class="d g" style="left:622.5px;top:313.5px"></i><div class="tx" style="left:623px;top:284px;font:bold 9px 'Liberation Sans',sans-serif;transform:scaleX(1.2);transform-origin:0 0">str</div><svg class="a" style="left:637px;top:285px" width="8" height="9" viewBox="0 0 8 9"><path d="M3.5 0v8M1 5l2.5 3 2.5-3" stroke="#000" fill="none"/></svg><svg class="a" style="left:620px;top:293px" width="30" height="8" viewBox="0 0 30 8"><circle cx="4.6" cy="4.500" r="2.600" fill="#00f"/><circle cx="11.500" cy="4.500" r="2.600"/><circle cx="18.200" cy="4.500" r="2.600"/><rect x="22" y="6" width="1" height="1"/><rect x="24" y="6" width="1" height="1"/></svg><svg class="a" style="left:621.5px;top:301px" width="8" height="10" viewBox="0 0 8 10"><path d="M3.5 9V1M1 4l2.5-3 2.5 3" stroke="#000" fill="none"/></svg><div class="tx" style="left:630px;top:301px;font:bold 9px 'Liberation Sans',sans-serif;transform:scaleX(1.15);transform-origin:0 0">MT</div><i class="w" style="left:652px;top:288px;width:13px;height:1px"></i><div class="el" style="left:667px;top:283px;width:31px;height:31px"></div><i class="d " style="left:665.5px;top:287.5px"></i><i class="d " style="left:671.5px;top:281.5px"></i><i class="d " style="left:697.5px;top:287.5px"></i><i class="d " style="left:697.5px;top:294.5px"></i><svg class="a" style="left:674px;top:286px" width="24" height="26" viewBox="0 0 24 26"><g stroke="#000" fill="#fff" stroke-width="1"><path d="M2.500 4v10.500h3M2.500 9.500h3M8 6.500h2M10.500 10.500h2.500M2.500 14.500v5.500h3" fill="none"/><rect x="1.500" y="1.500" width="2" height="2"/><rect x="7.500" y="5.500" width="2" height="2"/><rect x="13.500" y="9.500" width="2" height="2"/><rect x="7.500" y="13.500" width="2" height="2"/><rect x="7.500" y="18.500" width="2" height="2"/></g><rect x="13.500" y="17.500" width="6" height="6" fill="#e4e0d4" stroke="#c4c0b4"/><path d="M14.500 20.500h4M16.500 18.500v4" stroke="#a00000" stroke-width="1"/></svg><div class="fw"><div class="ft"></div><div class="ftl"></div><div class="ftr"></div><div class="fb"></div><svg class="a" style="left:5px;top:9px" width="17" height="15" viewBox="0 0 17 15"><path d="M1 5 L7 1.5 L13 3.5 L15.5 5 L15.5 8 L13 7 L7 10 L1 7.5Z" fill="#2c2c2c"/><path d="M1 5 L7 1.5 L14 4.5 L8 8Z" fill="#4c4c4c"/><path d="M1.5 7v4M3.5 8v4M5.5 9v4M7.5 10v4" stroke="#ddd" stroke-width="1.1"/><path d="M2.5 7.5v4M4.5 8.5v4M6.5 9.5v4" stroke="#222" stroke-width="0.9"/><path d="M15 6v4" stroke="#333" stroke-width="1.2"/></svg><div class="ftx">Form</div><div class="cb" style="left:242px"><i class="a" style="left:4px;top:12px;width:7px;height:3px;background:#fff"></i></div><div class="cb" style="left:265px"><i class="a" style="left:4px;top:4px;width:11px;height:11px;border:1px solid #fff;border-top-width:3px"></i></div><div class="cb x" style="left:288px"><svg class="a" style="left:0;top:0" width="19" height="19" viewBox="0 0 19 19"><path d="M5 5l9 9M14 5l-9 9" stroke="#fff" stroke-width="2.2"/></svg></div></div><div class="fc"><div class="sub"><svg class="a" style="left:129px;top:169px" width="371" height="565" viewBox="129 169 371 565"><rect x="129" y="169" width="371" height="565" fill="#fff"/><rect x="129" y="169" width="371" height="565" fill="url(#dp1)"/></svg><div class="el" style="left:452px;top:304px;width:29px;height:31px"></div><div class="tx" style="left:470.5px;top:321px;font:bold 11px 'Liberation Sans',sans-serif">T</div><i class="w" style="left:483px;top:308.87px;width:14px;height:1.25px"></i><i class="d " style="left:480.5px;top:308.5px"></i><i class="w" style="left:483px;top:315.87px;width:14px;height:1.25px"></i><i class="d " style="left:480.5px;top:315.5px"></i><i class="w" style="left:483px;top:322.87px;width:14px;height:1.25px"></i><i class="d " style="left:480.5px;top:322.5px"></i><i class="w" style="left:483px;top:329.87px;width:14px;height:1.25px"></i><i class="d " style="left:480.5px;top:329.5px"></i><i class="w" style="left:465px;top:350.87px;width:32px;height:1.25px"></i><i class="w" style="left:465px;top:395.87px;width:77px;height:1.25px"></i><div class="fw"><div class="ft"></div><div class="ftl"></div><div class="ftr"></div><div class="fb"></div><svg class="a" style="left:5px;top:9px" width="17" height="15" viewBox="0 0 17 15"><path d="M1 5 L7 1.5 L13 3.5 L15.5 5 L15.5 8 L13 7 L7 10 L1 7.5Z" fill="#2c2c2c"/><path d="M1 5 L7 1.5 L14 4.5 L8 8Z" fill="#4c4c4c"/><path d="M1.5 7v4M3.5 8v4M5.5 9v4M7.5 10v4" stroke="#ddd" stroke-width="1.1"/><path d="M2.5 7.5v4M4.5 8.5v4M6.5 9.5v4" stroke="#222" stroke-width="0.9"/><path d="M15 6v4" stroke="#333" stroke-width="1.2"/></svg><div class="ftx">Form</div><div class="cb" style="left:242px"><i class="a" style="left:4px;top:12px;width:7px;height:3px;background:#fff"></i></div><div class="cb" style="left:265px"><i class="a" style="left:4px;top:4px;width:11px;height:11px;border:1px solid #fff;border-top-width:3px"></i></div><div class="cb x" style="left:288px"><svg class="a" style="left:0;top:0" width="19" height="19" viewBox="0 0 19 19"><path d="M5 5l9 9M14 5l-9 9" stroke="#fff" stroke-width="2.2"/></svg></div></div><div class="fc"><div class="sub"><svg class="a" style="left:129px;top:169px" width="371" height="565" viewBox="129 169 371 565"><rect x="129" y="169" width="371" height="565" fill="#fff"/><rect x="129" y="169" width="371" height="565" fill="url(#dp2)"/></svg><div class="el" style="left:452px;top:304px;width:29px;height:31px"></div><div class="tx" style="left:470.5px;top:321px;font:bold 11px 'Liberation Sans',sans-serif">T</div><i class="w" style="left:483px;top:308.85px;width:14px;height:1.31px"></i><i class="d " style="left:480.5px;top:308.5px"></i><i class="w" style="left:483px;top:315.85px;width:14px;height:1.31px"></i><i class="d " style="left:480.5px;top:315.5px"></i><i class="w" style="left:483px;top:322.85px;width:14px;height:1.31px"></i><i class="d " style="left:480.5px;top:322.5px"></i><i class="w" style="left:483px;top:329.85px;width:14px;height:1.31px"></i><i class="d " style="left:480.5px;top:329.5px"></i><i class="w" style="left:465px;top:350.85px;width:32px;height:1.31px"></i><i class="w" style="left:465px;top:395.85px;width:77px;height:1.31px"></i><div class="fw"><div class="ft"></div><div class="ftl"></div><div class="ftr"></div><div class="fb"></div><svg class="a" style="left:5px;top:9px" width="17" height="15" viewBox="0 0 17 15"><path d="M1 5 L7 1.5 L13 3.5 L15.5 5 L15.5 8 L13 7 L7 10 L1 7.5Z" fill="#2c2c2c"/><path d="M1 5 L7 1.5 L14 4.5 L8 8Z" fill="#4c4c4c"/><path d="M1.5 7v4M3.5 8v4M5.5 9v4M7.5 10v4" stroke="#ddd" stroke-width="1.1"/><path d="M2.5 7.5v4M4.5 8.5v4M6.5 9.5v4" stroke="#222" stroke-width="0.9"/><path d="M15 6v4" stroke="#333" stroke-width="1.2"/></svg><div class="ftx">Form</div><div class="cb" style="left:242px"><i class="a" style="left:4px;top:12px;width:7px;height:3px;background:#fff"></i></div><div class="cb" style="left:265px"><i class="a" style="left:4px;top:4px;width:11px;height:11px;border:1px solid #fff;border-top-width:3px"></i></div><div class="cb x" style="left:288px"><svg class="a" style="left:0;top:0" width="19" height="19" viewBox="0 0 19 19"><path d="M5 5l9 9M14 5l-9 9" stroke="#fff" stroke-width="2.2"/></svg></div></div><div class="fc"><div class="sub"><svg class="a" style="left:129px;top:169px" width="371" height="565" viewBox="129 169 371 565"><rect x="129" y="169" width="371" height="565" fill="#fff"/><rect x="129" y="169" width="371" height="565" fill="url(#dp3)"/></svg><div class="el" style="left:452px;top:304px;width:29px;height:31px"></div><div class="tx" style="left:470.5px;top:321px;font:bold 11px 'Liberation Sans',sans-serif">T</div><i class="w" style="left:483px;top:308.82px;width:14px;height:1.37px"></i><i class="d " style="left:480.5px;top:308.5px"></i><i class="w" style="left:483px;top:315.82px;width:14px;height:1.37px"></i><i class="d " style="left:480.5px;top:315.5px"></i><i class="w" style="left:483px;top:322.82px;width:14px;height:1.37px"></i><i class="d " style="left:480.5px;top:322.5px"></i><i class="w" style="left:483px;top:329.82px;width:14px;height:1.37px"></i><i class="d " style="left:480.5px;top:329.5px"></i><i class="w" style="left:465px;top:350.82px;width:32px;height:1.37px"></i><i class="w" style="left:465px;top:395.82px;width:77px;height:1.37px"></i><div class="fw" style="box-shadow:0 0 0 0.45px #1236cc"><div class="ft"></div><div class="ftl"></div><div class="ftr"></div><div class="fb"></div><svg class="a" style="left:5px;top:9px" width="17" height="15" viewBox="0 0 17 15"><path d="M1 5 L7 1.5 L13 3.5 L15.5 5 L15.5 8 L13 7 L7 10 L1 7.5Z" fill="#2c2c2c"/><path d="M1 5 L7 1.5 L14 4.5 L8 8Z" fill="#4c4c4c"/><path d="M1.5 7v4M3.5 8v4M5.5 9v4M7.5 10v4" stroke="#ddd" stroke-width="1.1"/><path d="M2.5 7.5v4M4.5 8.5v4M6.5 9.5v4" stroke="#222" stroke-width="0.9"/><path d="M15 6v4" stroke="#333" stroke-width="1.2"/></svg><div class="ftx">Form</div><div class="cb" style="left:242px"><i class="a" style="left:4px;top:12px;width:7px;height:3px;background:#fff"></i></div><div class="cb" style="left:265px"><i class="a" style="left:4px;top:4px;width:11px;height:11px;border:1px solid #fff;border-top-width:3px"></i></div><div class="cb x" style="left:288px"><svg class="a" style="left:0;top:0" width="19" height="19" viewBox="0 0 19 19"><path d="M5 5l9 9M14 5l-9 9" stroke="#fff" stroke-width="2.2"/></svg></div></div><div class="fc"><div class="sub"><svg class="a" style="left:129px;top:169px" width="371" height="565" viewBox="129 169 371 565"><rect x="129" y="169" width="371" height="565" fill="#fff"/><rect x="129" y="169" width="371" height="565" fill="url(#dp4)"/></svg><div class="el" style="left:452px;top:304px;width:29px;height:31px"></div><div class="tx" style="left:470.5px;top:321px;font:bold 11px 'Liberation Sans',sans-serif">T</div><i class="w" style="left:483px;top:308.79px;width:14px;height:1.43px"></i><i class="d " style="left:480.5px;top:308.5px"></i><i class="w" style="left:483px;top:315.79px;width:14px;height:1.43px"></i><i class="d " style="left:480.5px;top:315.5px"></i><i class="w" style="left:483px;top:322.79px;width:14px;height:1.43px"></i><i class="d " style="left:480.5px;top:322.5px"></i><i class="w" style="left:483px;top:329.79px;width:14px;height:1.43px"></i><i class="d " style="left:480.5px;top:329.5px"></i><i class="w" style="left:465px;top:350.79px;width:32px;height:1.43px"></i><i class="w" style="left:465px;top:395.79px;width:77px;height:1.43px"></i><div class="fw" style="box-shadow:0 0 0 0.62px #1236cc"><div class="ft"></div><div class="ftl"></div><div class="ftr"></div><div class="fb"></div><svg class="a" style="left:5px;top:9px" width="17" height="15" viewBox="0 0 17 15"><path d="M1 5 L7 1.5 L13 3.5 L15.5 5 L15.5 8 L13 7 L7 10 L1 7.5Z" fill="#2c2c2c"/><path d="M1 5 L7 1.5 L14 4.5 L8 8Z" fill="#4c4c4c"/><path d="M1.5 7v4M3.5 8v4M5.5 9v4M7.5 10v4" stroke="#ddd" stroke-width="1.1"/><path d="M2.5 7.5v4M4.5 8.5v4M6.5 9.5v4" stroke="#222" stroke-width="0.9"/><path d="M15 6v4" stroke="#333" stroke-width="1.2"/></svg><div class="ftx">Form</div><div class="cb" style="left:242px"><i class="a" style="left:4px;top:12px;width:7px;height:3px;background:#fff"></i></div><div class="cb" style="left:265px"><i class="a" style="left:4px;top:4px;width:11px;height:11px;border:1px solid #fff;border-top-width:3px"></i></div><div class="cb x" style="left:288px"><svg class="a" style="left:0;top:0" width="19" height="19" viewBox="0 0 19 19"><path d="M5 5l9 9M14 5l-9 9" stroke="#fff" stroke-width="2.2"/></svg></div></div><div class="fc"><div class="sub"><svg class="a" style="left:129px;top:169px" width="371" height="565" viewBox="129 169 371 565"><rect x="129" y="169" width="371" height="565" fill="#fff"/><rect x="129" y="169" width="371" height="565" fill="url(#dp5)"/></svg><div class="el" style="left:452px;top:304px;width:29px;height:31px"></div><div class="tx" style="left:470.5px;top:321px;font:bold 11px 'Liberation Sans',sans-serif">T</div><i class="w" style="left:483px;top:308.76px;width:14px;height:1.49px"></i><i class="d " style="left:480.5px;top:308.5px"></i><i class="w" style="left:483px;top:315.76px;width:14px;height:1.49px"></i><i class="d " style="left:480.5px;top:315.5px"></i><i class="w" style="left:483px;top:322.76px;width:14px;height:1.49px"></i><i class="d " style="left:480.5px;top:322.5px"></i><i class="w" style="left:483px;top:329.76px;width:14px;height:1.49px"></i><i class="d " style="left:480.5px;top:329.5px"></i><i class="w" style="left:465px;top:350.76px;width:32px;height:1.49px"></i><i class="w" style="left:465px;top:395.76px;width:77px;height:1.49px"></i><div class="fw" style="box-shadow:0 0 0 0.81px #1236cc"><div class="ft"></div><div class="ftl"></div><div class="ftr"></div><div class="fb"></div><svg class="a" style="left:5px;top:9px" width="17" height="15" viewBox="0 0 17 15"><path d="M1 5 L7 1.5 L13 3.5 L15.5 5 L15.5 8 L13 7 L7 10 L1 7.5Z" fill="#2c2c2c"/><path d="M1 5 L7 1.5 L14 4.5 L8 8Z" fill="#4c4c4c"/><path d="M1.5 7v4M3.5 8v4M5.5 9v4M7.5 10v4" stroke="#ddd" stroke-width="1.1"/><path d="M2.5 7.5v4M4.5 8.5v4M6.5 9.5v4" stroke="#222" stroke-width="0.9"/><path d="M15 6v4" stroke="#333" stroke-width="1.2"/></svg><div class="ftx">Form</div><div class="cb" style="left:242px"><i class="a" style="left:4px;top:12px;width:7px;height:3px;background:#fff"></i></div><div class="cb" style="left:265px"><i class="a" style="left:4px;top:4px;width:11px;height:11px;border:1px solid #fff;border-top-width:3px"></i></div><div class="cb x" style="left:288px"><svg class="a" style="left:0;top:0" width="19" height="19" viewBox="0 0 19 19"><path d="M5 5l9 9M14 5l-9 9" stroke="#fff" stroke-width="2.2"/></svg></div></div><div class="fc"><div class="sub"><svg class="a" style="left:129px;top:169px" width="371" height="565" viewBox="129 169 371 565"><rect x="129" y="169" width="371" height="565" fill="#fff"/><rect x="129" y="169" width="371" height="565" fill="url(#dp6)"/></svg><div class="el" style="left:452px;top:304px;width:29px;height:31px"></div><div class="tx" style="left:470.5px;top:321px;font:bold 11px 'Liberation Sans',sans-serif">T</div><i class="w" style="left:483px;top:308.72px;width:14px;height:1.55px"></i><i class="d " style="left:480.5px;top:308.5px"></i><i class="w" style="left:483px;top:315.72px;width:14px;height:1.55px"></i><i class="d " style="left:480.5px;top:315.5px"></i><i class="w" style="left:483px;top:322.72px;width:14px;height:1.55px"></i><i class="d " style="left:480.5px;top:322.5px"></i><i class="w" style="left:483px;top:329.72px;width:14px;height:1.55px"></i><i class="d " style="left:480.5px;top:329.5px"></i><i class="w" style="left:465px;top:350.72px;width:32px;height:1.55px"></i><i class="w" style="left:465px;top:395.72px;width:77px;height:1.55px"></i><div class="fw" style="box-shadow:0 0 0 1.01px #1236cc"><div class="ft"></div><div class="ftl"></div><div class="ftr"></div><div class="fb"></div><svg class="a" style="left:5px;top:9px" width="17" height="15" viewBox="0 0 17 15"><path d="M1 5 L7 1.5 L13 3.5 L15.5 5 L15.5 8 L13 7 L7 10 L1 7.5Z" fill="#2c2c2c"/><path d="M1 5 L7 1.5 L14 4.5 L8 8Z" fill="#4c4c4c"/><path d="M1.5 7v4M3.5 8v4M5.5 9v4M7.5 10v4" stroke="#ddd" stroke-width="1.1"/><path d="M2.5 7.5v4M4.5 8.5v4M6.5 9.5v4" stroke="#222" stroke-width="0.9"/><path d="M15 6v4" stroke="#333" stroke-width="1.2"/></svg><div class="ftx">Form</div><div class="cb" style="left:242px"><i class="a" style="left:4px;top:12px;width:7px;height:3px;background:#fff"></i></div><div class="cb" style="left:265px"><i class="a" style="left:4px;top:4px;width:11px;height:11px;border:1px solid #fff;border-top-width:3px"></i></div><div class="cb x" style="left:288px"><svg class="a" style="left:0;top:0" width="19" height="19" viewBox="0 0 19 19"><path d="M5 5l9 9M14 5l-9 9" stroke="#fff" stroke-width="2.2"/></svg></div></div><div class="fc"><div class="sub"><svg class="a" style="left:129px;top:169px" width="371" height="565" viewBox="129 169 371 565"><rect x="129" y="169" width="371" height="565" fill="#fff"/><rect x="129" y="169" width="371" height="565" fill="url(#dp7)"/></svg><div class="el" style="left:452px;top:304px;width:29px;height:31px"></div><div class="tx" style="left:470.5px;top:321px;font:bold 11px 'Liberation Sans',sans-serif">T</div><i class="w" style="left:483px;top:308.69px;width:14px;height:1.62px"></i><i class="d " style="left:480.5px;top:308.5px"></i><i class="w" style="left:483px;top:315.69px;width:14px;height:1.62px"></i><i class="d " style="left:480.5px;top:315.5px"></i><i class="w" style="left:483px;top:322.69px;width:14px;height:1.62px"></i><i class="d " style="left:480.5px;top:322.5px"></i><i class="w" style="left:483px;top:329.69px;width:14px;height:1.62px"></i><i class="d " style="left:480.5px;top:329.5px"></i><i class="w" style="left:465px;top:350.69px;width:32px;height:1.62px"></i><i class="w" style="left:465px;top:395.69px;width:77px;height:1.62px"></i><div class="fw" style="box-shadow:0 0 0 1.23px #1236cc"><div class="ft"></div><div class="ftl"></div><div class="ftr"></div><div class="fb"></div><svg class="a" style="left:5px;top:9px" width="17" height="15" viewBox="0 0 17 15"><path d="M1 5 L7 1.5 L13 3.5 L15.5 5 L15.5 8 L13 7 L7 10 L1 7.5Z" fill="#2c2c2c"/><path d="M1 5 L7 1.5 L14 4.5 L8 8Z" fill="#4c4c4c"/><path d="M1.5 7v4M3.5 8v4M5.5 9v4M7.5 10v4" stroke="#ddd" stroke-width="1.1"/><path d="M2.5 7.5v4M4.5 8.5v4M6.5 9.5v4" stroke="#222" stroke-width="0.9"/><path d="M15 6v4" stroke="#333" stroke-width="1.2"/></svg><div class="ftx">Form</div><div class="cb" style="left:242px"><i class="a" style="left:4px;top:12px;width:7px;height:3px;background:#fff"></i></div><div class="cb" style="left:265px"><i class="a" style="left:4px;top:4px;width:11px;height:11px;border:1px solid #fff;border-top-width:3px"></i></div><div class="cb x" style="left:288px"><svg class="a" style="left:0;top:0" width="19" height="19" viewBox="0 0 19 19"><path d="M5 5l9 9M14 5l-9 9" stroke="#fff" stroke-width="2.2"/></svg></div></div><div class="fc"><div class="sub"><svg class="a" style="left:129px;top:169px" width="371" height="565" viewBox="129 169 371 565"><rect x="129" y="169" width="371" height="565" fill="#fff"/><rect x="129" y="169" width="371" height="565" fill="url(#dp8)"/></svg><div class="el" style="left:452px;top:304px;width:29px;height:31px"></div><div class="tx" style="left:470.5px;top:321px;font:bold 11px 'Liberation Sans',sans-serif">T</div><i class="w" style="left:483px;top:308.65px;width:14px;height:1.69px"></i><i class="d " style="left:480.5px;top:308.5px"></i><i class="w" style="left:483px;top:315.65px;width:14px;height:1.69px"></i><i class="d " style="left:480.5px;top:315.5px"></i><i class="w" style="left:483px;top:322.65px;width:14px;height:1.69px"></i><i class="d " style="left:480.5px;top:322.5px"></i><i class="w" style="left:483px;top:329.65px;width:14px;height:1.69px"></i><i class="d " style="left:480.5px;top:329.5px"></i><i class="w" style="left:465px;top:350.65px;width:32px;height:1.69px"></i><i class="w" style="left:465px;top:395.65px;width:77px;height:1.69px"></i><div class="fw" style="box-shadow:0 0 0 1.46px #1236cc"><div class="ft"></div><div class="ftl"></div><div class="ftr"></div><div class="fb"></div><svg class="a" style="left:5px;top:9px" width="17" height="15" viewBox="0 0 17 15"><path d="M1 5 L7 1.5 L13 3.5 L15.5 5 L15.5 8 L13 7 L7 10 L1 7.5Z" fill="#2c2c2c"/><path d="M1 5 L7 1.5 L14 4.5 L8 8Z" fill="#4c4c4c"/><path d="M1.5 7v4M3.5 8v4M5.5 9v4M7.5 10v4" stroke="#ddd" stroke-width="1.1"/><path d="M2.5 7.5v4M4.5 8.5v4M6.5 9.5v4" stroke="#222" stroke-width="0.9"/><path d="M15 6v4" stroke="#333" stroke-width="1.2"/></svg><div class="ftx">Form</div><div class="cb" style="left:242px"><i class="a" style="left:4px;top:12px;width:7px;height:3px;background:#fff"></i></div><div class="cb" style="left:265px"><i class="a" style="left:4px;top:4px;width:11px;height:11px;border:1px solid #fff;border-top-width:3px"></i></div><div class="cb x" style="left:288px"><svg class="a" style="left:0;top:0" width="19" height="19" viewBox="0 0 19 19"><path d="M5 5l9 9M14 5l-9 9" stroke="#fff" stroke-width="2.2"/></svg></div></div><div class="fc"><div class="sub"><svg class="a" style="left:129px;top:169px" width="371" height="565" viewBox="129 169 371 565"><rect x="129" y="169" width="371" height="565" fill="#fff"/><rect x="129" y="169" width="371" height="565" fill="url(#dp9)"/></svg><div class="el" style="left:452px;top:304px;width:29px;height:31px"></div><div class="tx" style="left:470.5px;top:321px;font:bold 11px 'Liberation Sans',sans-serif">T</div><i class="w" style="left:483px;top:308.62px;width:14px;height:1.77px"></i><i class="d " style="left:480.5px;top:308.5px"></i><i class="w" style="left:483px;top:315.62px;width:14px;height:1.77px"></i><i class="d " style="left:480.5px;top:315.5px"></i><i class="w" style="left:483px;top:322.62px;width:14px;height:1.77px"></i><i class="d " style="left:480.5px;top:322.5px"></i><i class="w" style="left:483px;top:329.62px;width:14px;height:1.77px"></i><i class="d " style="left:480.5px;top:329.5px"></i><i class="w" style="left:465px;top:350.62px;width:32px;height:1.77px"></i><i class="w" style="left:465px;top:395.62px;width:77px;height:1.77px"></i><div class="fw" style="box-shadow:0 0 0 1.71px #1236cc"><div class="ft"></div><div class="ftl"></div><div class="ftr"></div><div class="fb"></div><svg class="a" style="left:5px;top:9px" width="17" height="15" viewBox="0 0 17 15"><path d="M1 5 L7 1.5 L13 3.5 L15.5 5 L15.5 8 L13 7 L7 10 L1 7.5Z" fill="#2c2c2c"/><path d="M1 5 L7 1.5 L14 4.5 L8 8Z" fill="#4c4c4c"/><path d="M1.5 7v4M3.5 8v4M5.5 9v4M7.5 10v4" stroke="#ddd" stroke-width="1.1"/><path d="M2.5 7.5v4M4.5 8.5v4M6.5 9.5v4" stroke="#222" stroke-width="0.9"/><path d="M15 6v4" stroke="#333" stroke-width="1.2"/></svg><div class="ftx">Form</div><div class="cb" style="left:242px"><i class="a" style="left:4px;top:12px;width:7px;height:3px;background:#fff"></i></div><div class="cb" style="left:265px"><i class="a" style="left:4px;top:4px;width:11px;height:11px;border:1px solid #fff;border-top-width:3px"></i></div><div class="cb x" style="left:288px"><svg class="a" style="left:0;top:0" width="19" height="19" viewBox="0 0 19 19"><path d="M5 5l9 9M14 5l-9 9" stroke="#fff" stroke-width="2.2"/></svg></div></div><div class="fc"><div class="sub"><svg class="a" style="left:129px;top:169px" width="371" height="565" viewBox="129 169 371 565"><rect x="129" y="169" width="371" height="565" fill="#fff"/><rect x="129" y="169" width="371" height="565" fill="url(#dp10)"/></svg><div class="el" style="left:452px;top:304px;width:29px;height:31px"></div><div class="tx" style="left:470.5px;top:321px;font:bold 11px 'Liberation Sans',sans-serif">T</div><i class="w" style="left:483px;top:308.58px;width:14px;height:1.85px"></i><i class="d " style="left:480.5px;top:308.5px"></i><i class="w" style="left:483px;top:315.58px;width:14px;height:1.85px"></i><i class="d " style="left:480.5px;top:315.5px"></i><i class="w" style="left:483px;top:322.58px;width:14px;height:1.85px"></i><i class="d " style="left:480.5px;top:322.5px"></i><i class="w" style="left:483px;top:329.58px;width:14px;height:1.85px"></i><i class="d " style="left:480.5px;top:329.5px"></i><i class="w" style="left:465px;top:350.58px;width:32px;height:1.85px"></i><i class="w" style="left:465px;top:395.58px;width:77px;height:1.85px"></i><div class="fw" style="box-shadow:0 0 0 1.98px #1236cc"><div class="ft"></div><div class="ftl"></div><div class="ftr"></div><div class="fb"></div><svg class="a" style="left:5px;top:9px" width="17" height="15" viewBox="0 0 17 15"><path d="M1 5 L7 1.5 L13 3.5 L15.5 5 L15.5 8 L13 7 L7 10 L1 7.5Z" fill="#2c2c2c"/><path d="M1 5 L7 1.5 L14 4.5 L8 8Z" fill="#4c4c4c"/><path d="M1.5 7v4M3.5 8v4M5.5 9v4M7.5 10v4" stroke="#ddd" stroke-width="1.1"/><path d="M2.5 7.5v4M4.5 8.5v4M6.5 9.5v4" stroke="#222" stroke-width="0.9"/><path d="M15 6v4" stroke="#333" stroke-width="1.2"/></svg><div class="ftx">Form</div><div class="cb" style="left:242px"><i class="a" style="left:4px;top:12px;width:7px;height:3px;background:#fff"></i></div><div class="cb" style="left:265px"><i class="a" style="left:4px;top:4px;width:11px;height:11px;border:1px solid #fff;border-top-width:3px"></i></div><div class="cb x" style="left:288px"><svg class="a" style="left:0;top:0" width="19" height="19" viewBox="0 0 19 19"><path d="M5 5l9 9M14 5l-9 9" stroke="#fff" stroke-width="2.2"/></svg></div></div><div class="fc"><div class="sub"><svg class="a" style="left:129px;top:169px" width="371" height="565" viewBox="129 169 371 565"><rect x="129" y="169" width="371" height="565" fill="#fff"/><rect x="129" y="169" width="371" height="565" fill="url(#dp11)"/></svg><div class="el" style="left:452px;top:304px;width:29px;height:31px"></div><div class="tx" style="left:470.5px;top:321px;font:bold 11px 'Liberation Sans',sans-serif">T</div><i class="w" style="left:483px;top:308.48px;width:14px;height:2.05px"></i><i class="d " style="left:480.5px;top:308.5px"></i><i class="w" style="left:483px;top:315.48px;width:14px;height:2.05px"></i><i class="d " style="left:480.5px;top:315.5px"></i><i class="w" style="left:483px;top:322.48px;width:14px;height:2.05px"></i><i class="d " style="left:480.5px;top:322.5px"></i><i class="w" style="left:483px;top:329.48px;width:14px;height:2.05px"></i><i class="d " style="left:480.5px;top:329.5px"></i><i class="w" style="left:465px;top:350.48px;width:32px;height:2.05px"></i><i class="w" style="left:465px;top:395.48px;width:77px;height:2.05px"></i><div class="fw" style="box-shadow:0 0 0 2.27px #1236cc"><div class="ft"></div><div class="ftl"></div><div class="ftr"></div><div class="fb"></div><svg class="a" style="left:5px;top:9px" width="17" height="15" viewBox="0 0 17 15"><path d="M1 5 L7 1.5 L13 3.5 L15.5 5 L15.5 8 L13 7 L7 10 L1 7.5Z" fill="#2c2c2c"/><path d="M1 5 L7 1.5 L14 4.5 L8 8Z" fill="#4c4c4c"/><path d="M1.5 7v4M3.5 8v4M5.5 9v4M7.5 10v4" stroke="#ddd" stroke-width="1.1"/><path d="M2.5 7.5v4M4.5 8.5v4M6.5 9.5v4" stroke="#222" stroke-width="0.9"/><path d="M15 6v4" stroke="#333" stroke-width="1.2"/></svg><div class="ftx">Form</div><div class="cb" style="left:242px"><i class="a" style="left:4px;top:12px;width:7px;height:3px;background:#fff"></i></div><div class="cb" style="left:265px"><i class="a" style="left:4px;top:4px;width:11px;height:11px;border:1px solid #fff;border-top-width:3px"></i></div><div class="cb x" style="left:288px"><svg class="a" style="left:0;top:0" width="19" height="19" viewBox="0 0 19 19"><path d="M5 5l9 9M14 5l-9 9" stroke="#fff" stroke-width="2.2"/></svg></div></div><div class="fc"><div class="sub"><svg class="a" style="left:129px;top:169px" width="371" height="565" viewBox="129 169 371 565"><rect x="129" y="169" width="371" height="565" fill="#fff"/><rect x="129" y="169" width="371" height="565" fill="url(#dp12)"/></svg><div class="el" style="left:452px;top:304px;width:29px;height:31px"></div><div class="tx" style="left:470.5px;top:321px;font:bold 11px 'Liberation Sans',sans-serif">T</div><i class="w" style="left:483px;top:308.31px;width:14px;height:2.38px"></i><i class="d " style="left:480.5px;top:308.5px"></i><i class="w" style="left:483px;top:315.31px;width:14px;height:2.38px"></i><i class="d " style="left:480.5px;top:315.5px"></i><i class="w" style="left:483px;top:322.31px;width:14px;height:2.38px"></i><i class="d " style="left:480.5px;top:322.5px"></i><i class="w" style="left:483px;top:329.31px;width:14px;height:2.38px"></i><i class="d " style="left:480.5px;top:329.5px"></i><i class="w" style="left:465px;top:350.31px;width:32px;height:2.38px"></i><i class="w" style="left:465px;top:395.31px;width:77px;height:2.38px"></i><div class="fw" style="box-shadow:0 0 0 2.59px #1236cc"><div class="ft"></div><div class="ftl"></div><div class="ftr"></div><div class="fb"></div><svg class="a" style="left:5px;top:9px" width="17" height="15" viewBox="0 0 17 15"><path d="M1 5 L7 1.5 L13 3.5 L15.5 5 L15.5 8 L13 7 L7 10 L1 7.5Z" fill="#2c2c2c"/><path d="M1 5 L7 1.5 L14 4.5 L8 8Z" fill="#4c4c4c"/><path d="M1.5 7v4M3.5 8v4M5.5 9v4M7.5 10v4" stroke="#ddd" stroke-width="1.1"/><path d="M2.5 7.5v4M4.5 8.5v4M6.5 9.5v4" stroke="#222" stroke-width="0.9"/><path d="M15 6v4" stroke="#333" stroke-width="1.2"/></svg><div class="ftx">Form</div><div class="cb" style="left:242px"><i class="a" style="left:4px;top:12px;width:7px;height:3px;background:#fff"></i></div><div class="cb" style="left:265px"><i class="a" style="left:4px;top:4px;width:11px;height:11px;border:1px solid #fff;border-top-width:3px"></i></div><div class="cb x" style="left:288px"><svg class="a" style="left:0;top:0" width="19" height="19" viewBox="0 0 19 19"><path d="M5 5l9 9M14 5l-9 9" stroke="#fff" stroke-width="2.2"/></svg></div></div><div class="fc"><div class="sub"><svg class="a" style="left:129px;top:169px" width="371" height="565" viewBox="129 169 371 565"><rect x="129" y="169" width="371" height="565" fill="#fff"/><rect x="129" y="169" width="371" height="565" fill="url(#dp13)"/></svg><div class="el" style="left:452px;top:304px;width:29px;height:31px"></div><div class="tx" style="left:470.5px;top:321px;font:bold 11px 'Liberation Sans',sans-serif">T</div><i class="w" style="left:483px;top:308.12px;width:14px;height:2.76px"></i><i class="d " style="left:480.5px;top:308.5px"></i><i class="w" style="left:483px;top:315.12px;width:14px;height:2.76px"></i><i class="d " style="left:480.5px;top:315.5px"></i><i class="w" style="left:483px;top:322.12px;width:14px;height:2.76px"></i><i class="d " style="left:480.5px;top:322.5px"></i><i class="w" style="left:483px;top:329.12px;width:14px;height:2.76px"></i><i class="d " style="left:480.5px;top:329.5px"></i><i class="w" style="left:465px;top:350.12px;width:32px;height:2.76px"></i><i class="w" style="left:465px;top:395.12px;width:77px;height:2.76px"></i><div class="fw" style="box-shadow:0 0 0 2.93px #1236cc"><div class="ft"></div><div class="ftl"></div><div class="ftr"></div><div class="fb"></div><svg class="a" style="left:5px;top:9px" width="17" height="15" viewBox="0 0 17 15"><path d="M1 5 L7 1.5 L13 3.5 L15.5 5 L15.5 8 L13 7 L7 10 L1 7.5Z" fill="#2c2c2c"/><path d="M1 5 L7 1.5 L14 4.5 L8 8Z" fill="#4c4c4c"/><path d="M1.5 7v4M3.5 8v4M5.5 9v4M7.5 10v4" stroke="#ddd" stroke-width="1.1"/><path d="M2.5 7.5v4M4.5 8.5v4M6.5 9.5v4" stroke="#222" stroke-width="0.9"/><path d="M15 6v4" stroke="#333" stroke-width="1.2"/></svg><div class="ftx">Form</div><div class="cb" style="left:242px"><i class="a" style="left:4px;top:12px;width:7px;height:3px;background:#fff"></i></div><div class="cb" style="left:265px"><i class="a" style="left:4px;top:4px;width:11px;height:11px;border:1px solid #fff;border-top-width:3px"></i></div><div class="cb x" style="left:288px"><svg class="a" style="left:0;top:0" width="19" height="19" viewBox="0 0 19 19"><path d="M5 5l9 9M14 5l-9 9" stroke="#fff" stroke-width="2.2"/></svg></div></div><div class="fc"><div class="sub"><svg class="a" style="left:129px;top:169px" width="371" height="565" viewBox="129 169 371 565"><rect x="129" y="169" width="371" height="565" fill="#fff"/><rect x="129" y="169" width="371" height="565" fill="url(#dp14)"/></svg><div class="el" style="left:452px;top:304px;width:29px;height:31px"></div><div class="tx" style="left:470.5px;top:321px;font:bold 11px 'Liberation Sans',sans-serif">T</div><i class="w" style="left:483px;top:307.90px;width:14px;height:3.20px"></i><i class="d " style="left:480.5px;top:308.5px"></i><i class="w" style="left:483px;top:314.90px;width:14px;height:3.20px"></i><i class="d " style="left:480.5px;top:315.5px"></i><i class="w" style="left:483px;top:321.90px;width:14px;height:3.20px"></i><i class="d " style="left:480.5px;top:322.5px"></i><i class="w" style="left:483px;top:328.90px;width:14px;height:3.20px"></i><i class="d " style="left:480.5px;top:329.5px"></i><i class="w" style="left:465px;top:349.90px;width:32px;height:3.20px"></i><i class="w" style="left:465px;top:394.90px;width:77px;height:3.20px"></i><div class="fw" style="box-shadow:0 0 0 3.29px #1236cc"><div class="ft"></div><div class="ftl"></div><div class="ftr"></div><div class="fb"></div><svg class="a" style="left:5px;top:9px" width="17" height="15" viewBox="0 0 17 15"><path d="M1 5 L7 1.5 L13 3.5 L15.5 5 L15.5 8 L13 7 L7 10 L1 7.5Z" fill="#2c2c2c"/><path d="M1 5 L7 1.5 L14 4.5 L8 8Z" fill="#4c4c4c"/><path d="M1.5 7v4M3.5 8v4M5.5 9v4M7.5 10v4" stroke="#ddd" stroke-width="1.1"/><path d="M2.5 7.5v4M4.5 8.5v4M6.5 9.5v4" stroke="#222" stroke-width="0.9"/><path d="M15 6v4" stroke="#333" stroke-width="1.2"/></svg><div class="ftx">Form</div><div class="cb" style="left:242px"><i class="a" style="left:4px;top:12px;width:7px;height:3px;background:#fff"></i></div><div class="cb" style="left:265px"><i class="a" style="left:4px;top:4px;width:11px;height:11px;border:1px solid #fff;border-top-width:3px"></i></div><div class="cb x" style="left:288px"><svg class="a" style="left:0;top:0" width="19" height="19" viewBox="0 0 19 19"><path d="M5 5l9 9M14 5l-9 9" stroke="#fff" stroke-width="2.2"/></svg></div></div><div class="fc"><div class="sub"><svg class="a" style="left:129px;top:169px" width="371" height="565" viewBox="129 169 371 565"><rect x="129" y="169" width="371" height="565" fill="#fff"/><rect x="129" y="169" width="371" height="565" fill="url(#dp15)"/></svg><div class="el" style="left:452px;top:304px;width:29px;height:31px"></div><div class="tx" style="left:470.5px;top:321px;font:bold 11px 'Liberation Sans',sans-serif">T</div><i class="w" style="left:483px;top:307.64px;width:14px;height:3.71px"></i><i class="d " style="left:480.5px;top:308.5px"></i><i class="w" style="left:483px;top:314.64px;width:14px;height:3.71px"></i><i class="d " style="left:480.5px;top:315.5px"></i><i class="w" style="left:483px;top:321.64px;width:14px;height:3.71px"></i><i class="d " style="left:480.5px;top:322.5px"></i><i class="w" style="left:483px;top:328.64px;width:14px;height:3.71px"></i><i class="d " style="left:480.5px;top:329.5px"></i><i class="w" style="left:465px;top:349.64px;width:32px;height:3.71px"></i><i class="w" style="left:465px;top:394.64px;width:77px;height:3.71px"></i><div class="fw" style="box-shadow:0 0 0 3.68px #1236cc"><div class="ft"></div><div class="ftl"></div><div class="ftr"></div><div class="fb"></div><svg class="a" style="left:5px;top:9px" width="17" height="15" viewBox="0 0 17 15"><path d="M1 5 L7 1.5 L13 3.5 L15.5 5 L15.5 8 L13 7 L7 10 L1 7.5Z" fill="#2c2c2c"/><path d="M1 5 L7 1.5 L14 4.5 L8 8Z" fill="#4c4c4c"/><path d="M1.5 7v4M3.5 8v4M5.5 9v4M7.5 10v4" stroke="#ddd" stroke-width="1.1"/><path d="M2.5 7.5v4M4.5 8.5v4M6.5 9.5v4" stroke="#222" stroke-width="0.9"/><path d="M15 6v4" stroke="#333" stroke-width="1.2"/></svg><div class="ftx">Form</div><div class="cb" style="left:242px"><i class="a" style="left:4px;top:12px;width:7px;height:3px;background:#fff"></i></div><div class="cb" style="left:265px"><i class="a" style="left:4px;top:4px;width:11px;height:11px;border:1px solid #fff;border-top-width:3px"></i></div><div class="cb x" style="left:288px"><svg class="a" style="left:0;top:0" width="19" height="19" viewBox="0 0 19 19"><path d="M5 5l9 9M14 5l-9 9" stroke="#fff" stroke-width="2.2"/></svg></div></div><div class="fc"><div class="sub"><svg class="a" style="left:129px;top:169px" width="371" height="565" viewBox="129 169 371 565"><rect x="129" y="169" width="371" height="565" fill="#fff"/><rect x="129" y="169" width="371" height="565" fill="url(#dp16)"/></svg><div class="el" style="left:452px;top:304px;width:29px;height:31px"></div><div class="tx" style="left:470.5px;top:321px;font:bold 11px 'Liberation Sans',sans-serif">T</div><i class="w" style="left:483px;top:307.35px;width:14px;height:4.30px"></i><i class="d " style="left:480.5px;top:308.5px"></i><i class="w" style="left:483px;top:314.35px;width:14px;height:4.30px"></i><i class="d " style="left:480.5px;top:315.5px"></i><i class="w" style="left:483px;top:321.35px;width:14px;height:4.30px"></i><i class="d " style="left:480.5px;top:322.5px"></i><i class="w" style="left:483px;top:328.35px;width:14px;height:4.30px"></i><i class="d " style="left:480.5px;top:329.5px"></i><i class="w" style="left:465px;top:349.35px;width:32px;height:4.30px"></i><i class="w" style="left:465px;top:394.35px;width:77px;height:4.30px"></i><div class="fw" style="box-shadow:0 0 0 4.10px #1236cc"><div class="ft"></div><div class="ftl"></div><div class="ftr"></div><div class="fb"></div><svg class="a" style="left:5px;top:9px" width="17" height="15" viewBox="0 0 17 15"><path d="M1 5 L7 1.5 L13 3.5 L15.5 5 L15.5 8 L13 7 L7 10 L1 7.5Z" fill="#2c2c2c"/><path d="M1 5 L7 1.5 L14 4.5 L8 8Z" fill="#4c4c4c"/><path d="M1.5 7v4M3.5 8v4M5.5 9v4M7.5 10v4" stroke="#ddd" stroke-width="1.1"/><path d="M2.5 7.5v4M4.5 8.5v4M6.5 9.5v4" stroke="#222" stroke-width="0.9"/><path d="M15 6v4" stroke="#333" stroke-width="1.2"/></svg><div class="ftx">Form</div><div class="cb" style="left:242px"><i class="a" style="left:4px;top:12px;width:7px;height:3px;background:#fff"></i></div><div class="cb" style="left:265px"><i class="a" style="left:4px;top:4px;width:11px;height:11px;border:1px solid #fff;border-top-width:3px"></i></div><div class="cb x" style="left:288px"><svg class="a" style="left:0;top:0" width="19" height="19" viewBox="0 0 19 19"><path d="M5 5l9 9M14 5l-9 9" stroke="#fff" stroke-width="2.2"/></svg></div></div><div class="fc"><div class="sub"><svg class="a" style="left:129px;top:169px" width="371" height="565" viewBox="129 169 371 565"><rect x="129" y="169" width="371" height="565" fill="#fff"/><rect x="129" y="169" width="371" height="565" fill="url(#dp17)"/></svg><div class="el" style="left:452px;top:304px;width:29px;height:31px"></div><div class="tx" style="left:470.5px;top:321px;font:bold 11px 'Liberation Sans',sans-serif">T</div><i class="w" style="left:483px;top:307.00px;width:14px;height:4.99px"></i><i class="d " style="left:480.5px;top:308.5px"></i><i class="w" style="left:483px;top:314.00px;width:14px;height:4.99px"></i><i class="d " style="left:480.5px;top:315.5px"></i><i class="w" style="left:483px;top:321.00px;width:14px;height:4.99px"></i><i class="d " style="left:480.5px;top:322.5px"></i><i class="w" style="left:483px;top:328.00px;width:14px;height:4.99px"></i><i class="d " style="left:480.5px;top:329.5px"></i><i class="w" style="left:465px;top:349.00px;width:32px;height:4.99px"></i><i class="w" style="left:465px;top:394.00px;width:77px;height:4.99px"></i><div class="fw" style="box-shadow:0 0 0 4.56px #1236cc"><div class="ft"></div><div class="ftl"></div><div class="ftr"></div><div class="fb"></div><svg class="a" style="left:5px;top:9px" width="17" height="15" viewBox="0 0 17 15"><path d="M1 5 L7 1.5 L13 3.5 L15.5 5 L15.5 8 L13 7 L7 10 L1 7.5Z" fill="#2c2c2c"/><path d="M1 5 L7 1.5 L14 4.5 L8 8Z" fill="#4c4c4c"/><path d="M1.5 7v4M3.5 8v4M5.5 9v4M7.5 10v4" stroke="#ddd" stroke-width="1.1"/><path d="M2.5 7.5v4M4.5 8.5v4M6.5 9.5v4" stroke="#222" stroke-width="0.9"/><path d="M15 6v4" stroke="#333" stroke-width="1.2"/></svg><div class="ftx">Form</div><div class="cb" style="left:242px"><i class="a" style="left:4px;top:12px;width:7px;height:3px;background:#fff"></i></div><div class="cb" style="left:265px"><i class="a" style="left:4px;top:4px;width:11px;height:11px;border:1px solid #fff;border-top-width:3px"></i></div><div class="cb x" style="left:288px"><svg class="a" style="left:0;top:0" width="19" height="19" viewBox="0 0 19 19"><path d="M5 5l9 9M14 5l-9 9" stroke="#fff" stroke-width="2.2"/></svg></div></div><div class="fc"><div class="sub"><svg class="a" style="left:129px;top:169px" width="371" height="565" viewBox="129 169 371 565"><rect x="129" y="169" width="371" height="565" fill="#fff"/><rect x="129" y="169" width="371" height="565" fill="url(#dp18)"/></svg><div class="el" style="left:452px;top:304px;width:29px;height:31px"></div><div class="tx" style="left:470.5px;top:321px;font:bold 11px 'Liberation Sans',sans-serif">T</div><i class="w" style="left:483px;top:306.60px;width:14px;height:5.79px"></i><i class="d " style="left:480.5px;top:308.5px"></i><i class="w" style="left:483px;top:313.60px;width:14px;height:5.79px"></i><i class="d " style="left:480.5px;top:315.5px"></i><i class="w" style="left:483px;top:320.60px;width:14px;height:5.79px"></i><i class="d " style="left:480.5px;top:322.5px"></i><i class="w" style="left:483px;top:327.60px;width:14px;height:5.79px"></i><i class="d " style="left:480.5px;top:329.5px"></i><i class="w" style="left:465px;top:348.60px;width:32px;height:5.79px"></i><i class="w" style="left:465px;top:393.60px;width:77px;height:5.79px"></i><div class="fw" style="box-shadow:0 0 0 5.05px #1236cc"><div class="ft"></div><div class="ftl"></div><div class="ftr"></div><div class="fb"></div><svg class="a" style="left:5px;top:9px" width="17" height="15" viewBox="0 0 17 15"><path d="M1 5 L7 1.5 L13 3.5 L15.5 5 L15.5 8 L13 7 L7 10 L1 7.5Z" fill="#2c2c2c"/><path d="M1 5 L7 1.5 L14 4.5 L8 8Z" fill="#4c4c4c"/><path d="M1.5 7v4M3.5 8v4M5.5 9v4M7.5 10v4" stroke="#ddd" stroke-width="1.1"/><path d="M2.5 7.5v4M4.5 8.5v4M6.5 9.5v4" stroke="#222" stroke-width="0.9"/><path d="M15 6v4" stroke="#333" stroke-width="1.2"/></svg><div class="ftx">Form</div><div class="cb" style="left:242px"><i class="a" style="left:4px;top:12px;width:7px;height:3px;background:#fff"></i></div><div class="cb" style="left:265px"><i class="a" style="left:4px;top:4px;width:11px;height:11px;border:1px solid #fff;border-top-width:3px"></i></div><div class="cb x" style="left:288px"><svg class="a" style="left:0;top:0" width="19" height="19" viewBox="0 0 19 19"><path d="M5 5l9 9M14 5l-9 9" stroke="#fff" stroke-width="2.2"/></svg></div></div><div class="fc"><div class="sub"><svg class="a" style="left:129px;top:169px" width="371" height="565" viewBox="129 169 371 565"><rect x="129" y="169" width="371" height="565" fill="#fff"/><rect x="129" y="169" width="371" height="565" fill="url(#dp19)"/></svg><div class="el" style="left:452px;top:304px;width:29px;height:31px"></div><div class="tx" style="left:470.5px;top:321px;font:bold 11px 'Liberation Sans',sans-serif">T</div><i class="w" style="left:483px;top:306.14px;width:14px;height:6.72px"></i><i class="d " style="left:480.5px;top:308.5px"></i><i class="w" style="left:483px;top:313.14px;width:14px;height:6.72px"></i><i class="d " style="left:480.5px;top:315.5px"></i><i class="w" style="left:483px;top:320.14px;width:14px;height:6.72px"></i><i class="d " style="left:480.5px;top:322.5px"></i><i class="w" style="left:483px;top:327.14px;width:14px;height:6.72px"></i><i class="d " style="left:480.5px;top:329.5px"></i><i class="w" style="left:465px;top:348.14px;width:32px;height:6.72px"></i><i class="w" style="left:465px;top:393.14px;width:77px;height:6.72px"></i><div class="fw" style="box-shadow:0 0 0 5.58px #1236cc"><div class="ft"></div><div class="ftl"></div><div class="ftr"></div><div class="fb"></div><svg class="a" style="left:5px;top:9px" width="17" height="15" viewBox="0 0 17 15"><path d="M1 5 L7 1.5 L13 3.5 L15.5 5 L15.5 8 L13 7 L7 10 L1 7.5Z" fill="#2c2c2c"/><path d="M1 5 L7 1.5 L14 4.5 L8 8Z" fill="#4c4c4c"/><path d="M1.5 7v4M3.5 8v4M5.5 9v4M7.5 10v4" stroke="#ddd" stroke-width="1.1"/><path d="M2.5 7.5v4M4.5 8.5v4M6.5 9.5v4" stroke="#222" stroke-width="0.9"/><path d="M15 6v4" stroke="#333" stroke-width="1.2"/></svg><div class="ftx">Form</div><div class="cb" style="left:242px"><i class="a" style="left:4px;top:12px;width:7px;height:3px;background:#fff"></i></div><div class="cb" style="left:265px"><i class="a" style="left:4px;top:4px;width:11px;height:11px;border:1px solid #fff;border-top-width:3px"></i></div><div class="cb x" style="left:288px"><svg class="a" style="left:0;top:0" width="19" height="19" viewBox="0 0 19 19"><path d="M5 5l9 9M14 5l-9 9" stroke="#fff" stroke-width="2.2"/></svg></div></div><div class="fc"><div class="sub"><svg class="a" style="left:129px;top:169px" width="371" height="565" viewBox="129 169 371 565"><rect x="129" y="169" width="371" height="565" fill="#fff"/><rect x="129" y="169" width="371" height="565" fill="url(#dp20)"/></svg><div class="el" style="left:452px;top:304px;width:29px;height:31px"></div><div class="tx" style="left:470.5px;top:321px;font:bold 11px 'Liberation Sans',sans-serif">T</div><i class="w" style="left:483px;top:305.60px;width:14px;height:7.80px"></i><i class="d " style="left:480.5px;top:308.5px"></i><i class="w" style="left:483px;top:312.60px;width:14px;height:7.80px"></i><i class="d " style="left:480.5px;top:315.5px"></i><i class="w" style="left:483px;top:319.60px;width:14px;height:7.80px"></i><i class="d " style="left:480.5px;top:322.5px"></i><i class="w" style="left:483px;top:326.60px;width:14px;height:7.80px"></i><i class="d " style="left:480.5px;top:329.5px"></i><i class="w" style="left:465px;top:347.60px;width:32px;height:7.80px"></i><i class="w" style="left:465px;top:392.60px;width:77px;height:7.80px"></i><div class="fw" style="box-shadow:0 0 0 6.15px #1236cc"><div class="ft"></div><div class="ftl"></div><div class="ftr"></div><div class="fb"></div><svg class="a" style="left:5px;top:9px" width="17" height="15" viewBox="0 0 17 15"><path d="M1 5 L7 1.5 L13 3.5 L15.5 5 L15.5 8 L13 7 L7 10 L1 7.5Z" fill="#2c2c2c"/><path d="M1 5 L7 1.5 L14 4.5 L8 8Z" fill="#4c4c4c"/><path d="M1.5 7v4M3.5 8v4M5.5 9v4M7.5 10v4" stroke="#ddd" stroke-width="1.1"/><path d="M2.5 7.5v4M4.5 8.5v4M6.5 9.5v4" stroke="#222" stroke-width="0.9"/><path d="M15 6v4" stroke="#333" stroke-width="1.2"/></svg><div class="ftx">Form</div><div class="cb" style="left:242px"><i class="a" style="left:4px;top:12px;width:7px;height:3px;background:#fff"></i></div><div class="cb" style="left:265px"><i class="a" style="left:4px;top:4px;width:11px;height:11px;border:1px solid #fff;border-top-width:3px"></i></div><div class="cb x" style="left:288px"><svg class="a" style="left:0;top:0" width="19" height="19" viewBox="0 0 19 19"><path d="M5 5l9 9M14 5l-9 9" stroke="#fff" stroke-width="2.2"/></svg></div></div><div class="fc"><div class="sub"><svg class="a" style="left:129px;top:169px" width="371" height="565" viewBox="129 169 371 565"><rect x="129" y="169" width="371" height="565" fill="#fff"/><rect x="129" y="169" width="371" height="565" fill="url(#dp21)"/></svg><div class="el" style="left:452px;top:304px;width:29px;height:31px"></div><div class="tx" style="left:470.5px;top:321px;font:bold 11px 'Liberation Sans',sans-serif">T</div><i class="w" style="left:483px;top:304.98px;width:14px;height:9.04px"></i><i class="d " style="left:480.5px;top:308.5px"></i><i class="w" style="left:483px;top:311.98px;width:14px;height:9.04px"></i><i class="d " style="left:480.5px;top:315.5px"></i><i class="w" style="left:483px;top:318.98px;width:14px;height:9.04px"></i><i class="d " style="left:480.5px;top:322.5px"></i><i class="w" style="left:483px;top:325.98px;width:14px;height:9.04px"></i><i class="d " style="left:480.5px;top:329.5px"></i><i class="w" style="left:465px;top:346.98px;width:32px;height:9.04px"></i><i class="w" style="left:465px;top:391.98px;width:77px;height:9.04px"></i><div class="fw" style="box-shadow:0 0 0 6.76px #1236cc"><div class="ft"></div><div class="ftl"></div><div class="ftr"></div><div class="fb"></div><svg class="a" style="left:5px;top:9px" width="17" height="15" viewBox="0 0 17 15"><path d="M1 5 L7 1.5 L13 3.5 L15.5 5 L15.5 8 L13 7 L7 10 L1 7.5Z" fill="#2c2c2c"/><path d="M1 5 L7 1.5 L14 4.5 L8 8Z" fill="#4c4c4c"/><path d="M1.5 7v4M3.5 8v4M5.5 9v4M7.5 10v4" stroke="#ddd" stroke-width="1.1"/><path d="M2.5 7.5v4M4.5 8.5v4M6.5 9.5v4" stroke="#222" stroke-width="0.9"/><path d="M15 6v4" stroke="#333" stroke-width="1.2"/></svg><div class="ftx">Form</div><div class="cb" style="left:242px"><i class="a" style="left:4px;top:12px;width:7px;height:3px;background:#fff"></i></div><div class="cb" style="left:265px"><i class="a" style="left:4px;top:4px;width:11px;height:11px;border:1px solid #fff;border-top-width:3px"></i></div><div class="cb x" style="left:288px"><svg class="a" style="left:0;top:0" width="19" height="19" viewBox="0 0 19 19"><path d="M5 5l9 9M14 5l-9 9" stroke="#fff" stroke-width="2.2"/></svg></div></div><div class="fc"><div class="sub"><svg class="a" style="left:129px;top:169px" width="371" height="565" viewBox="129 169 371 565"><rect x="129" y="169" width="371" height="565" fill="#fff"/><rect x="129" y="169" width="371" height="565" fill="url(#dp22)"/></svg><div class="el" style="left:452px;top:304px;width:29px;height:31px"></div><div class="tx" style="left:470.5px;top:321px;font:bold 11px 'Liberation Sans',sans-serif">T</div><i class="w" style="left:483px;top:304.25px;width:14px;height:10.49px"></i><i class="d " style="left:480.5px;top:308.5px"></i><i class="w" style="left:483px;top:311.25px;width:14px;height:10.49px"></i><i class="d " style="left:480.5px;top:315.5px"></i><i class="w" style="left:483px;top:318.25px;width:14px;height:10.49px"></i><i class="d " style="left:480.5px;top:322.5px"></i><i class="w" style="left:483px;top:325.25px;width:14px;height:10.49px"></i><i class="d " style="left:480.5px;top:329.5px"></i><i class="w" style="left:465px;top:346.25px;width:32px;height:10.49px"></i><i class="w" style="left:465px;top:391.25px;width:77px;height:10.49px"></i><div class="fw" style="box-shadow:0 0 0 7.42px #1236cc"><div class="ft"></div><div class="ftl"></div><div class="ftr"></div><div class="fb"></div><svg class="a" style="left:5px;top:9px" width="17" height="15" viewBox="0 0 17 15"><path d="M1 5 L7 1.5 L13 3.5 L15.5 5 L15.5 8 L13 7 L7 10 L1 7.5Z" fill="#2c2c2c"/><path d="M1 5 L7 1.5 L14 4.5 L8 8Z" fill="#4c4c4c"/><path d="M1.5 7v4M3.5 8v4M5.5 9v4M7.5 10v4" stroke="#ddd" stroke-width="1.1"/><path d="M2.5 7.5v4M4.5 8.5v4M6.5 9.5v4" stroke="#222" stroke-width="0.9"/><path d="M15 6v4" stroke="#333" stroke-width="1.2"/></svg><div class="ftx">Form</div><div class="cb" style="left:242px"><i class="a" style="left:4px;top:12px;width:7px;height:3px;background:#fff"></i></div><div class="cb" style="left:265px"><i class="a" style="left:4px;top:4px;width:11px;height:11px;border:1px solid #fff;border-top-width:3px"></i></div><div class="cb x" style="left:288px"><svg class="a" style="left:0;top:0" width="19" height="19" viewBox="0 0 19 19"><path d="M5 5l9 9M14 5l-9 9" stroke="#fff" stroke-width="2.2"/></svg></div></div><div class="fc"><div class="sub"><svg class="a" style="left:129px;top:169px" width="371" height="565" viewBox="129 169 371 565"><rect x="129" y="169" width="371" height="565" fill="#fff"/><rect x="129" y="169" width="371" height="565" fill="url(#dp23)"/></svg><div class="el" style="left:452px;top:304px;width:29px;height:31px"></div><div class="tx" style="left:470.5px;top:321px;font:bold 11px 'Liberation Sans',sans-serif">T</div><i class="w" style="left:483px;top:303.41px;width:14px;height:12.17px"></i><i class="d " style="left:480.5px;top:308.5px"></i><i class="w" style="left:483px;top:310.41px;width:14px;height:12.17px"></i><i class="d " style="left:480.5px;top:315.5px"></i><i class="w" style="left:483px;top:317.41px;width:14px;height:12.17px"></i><i class="d " style="left:480.5px;top:322.5px"></i><i class="w" style="left:483px;top:324.41px;width:14px;height:12.17px"></i><i class="d " style="left:480.5px;top:329.5px"></i><i class="w" style="left:465px;top:345.41px;width:32px;height:12.17px"></i><i class="w" style="left:465px;top:390.41px;width:77px;height:12.17px"></i><div class="fw" style="box-shadow:0 0 0 8.13px #1236cc"><div class="ft"></div><div class="ftl"></div><div class="ftr"></div><div class="fb"></div><svg class="a" style="left:5px;top:9px" width="17" height="15" viewBox="0 0 17 15"><path d="M1 5 L7 1.5 L13 3.5 L15.5 5 L15.5 8 L13 7 L7 10 L1 7.5Z" fill="#2c2c2c"/><path d="M1 5 L7 1.5 L14 4.5 L8 8Z" fill="#4c4c4c"/><path d="M1.5 7v4M3.5 8v4M5.5 9v4M7.5 10v4" stroke="#ddd" stroke-width="1.1"/><path d="M2.5 7.5v4M4.5 8.5v4M6.5 9.5v4" stroke="#222" stroke-width="0.9"/><path d="M15 6v4" stroke="#333" stroke-width="1.2"/></svg><div class="ftx">Form</div><div class="cb" style="left:242px"><i class="a" style="left:4px;top:12px;width:7px;height:3px;background:#fff"></i></div><div class="cb" style="left:265px"><i class="a" style="left:4px;top:4px;width:11px;height:11px;border:1px solid #fff;border-top-width:3px"></i></div><div class="cb x" style="left:288px"><svg class="a" style="left:0;top:0" width="19" height="19" viewBox="0 0 19 19"><path d="M5 5l9 9M14 5l-9 9" stroke="#fff" stroke-width="2.2"/></svg></div></div><div class="fc"><div class="sub"><svg class="a" style="left:129px;top:169px" width="371" height="565" viewBox="129 169 371 565"><rect x="129" y="169" width="371" height="565" fill="#fff"/><rect x="129" y="169" width="371" height="565" fill="url(#dp24)"/></svg><div class="el" style="left:452px;top:304px;width:29px;height:31px"></div><div class="tx" style="left:470.5px;top:321px;font:bold 11px 'Liberation Sans',sans-serif">T</div><i class="w" style="left:483px;top:302.44px;width:14px;height:14.12px"></i><i class="d " style="left:480.5px;top:308.5px"></i><i class="w" style="left:483px;top:309.44px;width:14px;height:14.12px"></i><i class="d " style="left:480.5px;top:315.5px"></i><i class="w" style="left:483px;top:316.44px;width:14px;height:14.12px"></i><i class="d " style="left:480.5px;top:322.5px"></i><i class="w" style="left:483px;top:323.44px;width:14px;height:14.12px"></i><i class="d " style="left:480.5px;top:329.5px"></i><i class="w" style="left:465px;top:344.44px;width:32px;height:14.12px"></i><i class="w" style="left:465px;top:389.44px;width:77px;height:14.12px"></i><div class="fw" style="box-shadow:0 0 0 8.90px #1236cc"><div class="ft"></div><div class="ftl"></div><div class="ftr"></div><div class="fb"></div><svg class="a" style="left:5px;top:9px" width="17" height="15" viewBox="0 0 17 15"><path d="M1 5 L7 1.5 L13 3.5 L15.5 5 L15.5 8 L13 7 L7 10 L1 7.5Z" fill="#2c2c2c"/><path d="M1 5 L7 1.5 L14 4.5 L8 8Z" fill="#4c4c4c"/><path d="M1.5 7v4M3.5 8v4M5.5 9v4M7.5 10v4" stroke="#ddd" stroke-width="1.1"/><path d="M2.5 7.5v4M4.5 8.5v4M6.5 9.5v4" stroke="#222" stroke-width="0.9"/><path d="M15 6v4" stroke="#333" stroke-width="1.2"/></svg><div class="ftx">Form</div><div class="cb" style="left:242px"><i class="a" style="left:4px;top:12px;width:7px;height:3px;background:#fff"></i></div><div class="cb" style="left:265px"><i class="a" style="left:4px;top:4px;width:11px;height:11px;border:1px solid #fff;border-top-width:3px"></i></div><div class="cb x" style="left:288px"><svg class="a" style="left:0;top:0" width="19" height="19" viewBox="0 0 19 19"><path d="M5 5l9 9M14 5l-9 9" stroke="#fff" stroke-width="2.2"/></svg></div></div><div class="fc"><div class="sub"><svg class="a" style="left:129px;top:169px" width="371" height="565" viewBox="129 169 371 565"><rect x="129" y="169" width="371" height="565" fill="#fff"/><rect x="129" y="169" width="371" height="565" fill="url(#dp25)"/></svg><div class="el" style="left:452px;top:304px;width:29px;height:31px"></div><div class="tx" style="left:470.5px;top:321px;font:bold 11px 'Liberation Sans',sans-serif">T</div><i class="w" style="left:483px;top:301.31px;width:14px;height:16.38px"></i><i class="d " style="left:480.5px;top:308.5px"></i><i class="w" style="left:483px;top:308.31px;width:14px;height:16.38px"></i><i class="d " style="left:480.5px;top:315.5px"></i><i class="w" style="left:483px;top:315.31px;width:14px;height:16.38px"></i><i class="d " style="left:480.5px;top:322.5px"></i><i class="w" style="left:483px;top:322.31px;width:14px;height:16.38px"></i><i class="d " style="left:480.5px;top:329.5px"></i><i class="w" style="left:465px;top:343.31px;width:32px;height:16.38px"></i><i class="w" style="left:465px;top:388.31px;width:77px;height:16.38px"></i><div class="fw" style="box-shadow:0 0 0 9.72px #1236cc"><div class="ft"></div><div class="ftl"></div><div class="ftr"></div><div class="fb"></div><svg class="a" style="left:5px;top:9px" width="17" height="15" viewBox="0 0 17 15"><path d="M1 5 L7 1.5 L13 3.5 L15.5 5 L15.5 8 L13 7 L7 10 L1 7.5Z" fill="#2c2c2c"/><path d="M1 5 L7 1.5 L14 4.5 L8 8Z" fill="#4c4c4c"/><path d="M1.5 7v4M3.5 8v4M5.5 9v4M7.5 10v4" stroke="#ddd" stroke-width="1.1"/><path d="M2.5 7.5v4M4.5 8.5v4M6.5 9.5v4" stroke="#222" stroke-width="0.9"/><path d="M15 6v4" stroke="#333" stroke-width="1.2"/></svg><div class="ftx">Form</div><div class="cb" style="left:242px"><i class="a" style="left:4px;top:12px;width:7px;height:3px;background:#fff"></i></div><div class="cb" style="left:265px"><i class="a" style="left:4px;top:4px;width:11px;height:11px;border:1px solid #fff;border-top-width:3px"></i></div><div class="cb x" style="left:288px"><svg class="a" style="left:0;top:0" width="19" height="19" viewBox="0 0 19 19"><path d="M5 5l9 9M14 5l-9 9" stroke="#fff" stroke-width="2.2"/></svg></div></div><div class="fc"><div class="sub"><svg class="a" style="left:129px;top:169px" width="371" height="565" viewBox="129 169 371 565"><rect x="129" y="169" width="371" height="565" fill="#fff"/><rect x="129" y="169" width="371" height="565" fill="url(#dp26)"/></svg><div class="el" style="left:452px;top:304px;width:29px;height:31px"></div><div class="tx" style="left:470.5px;top:321px;font:bold 11px 'Liberation Sans',sans-serif">T</div><i class="w" style="left:483px;top:300.00px;width:14px;height:19.01px"></i><i class="d " style="left:480.5px;top:308.5px"></i><i class="w" style="left:483px;top:307.00px;width:14px;height:19.01px"></i><i class="d " style="left:480.5px;top:315.5px"></i><i class="w" style="left:483px;top:314.00px;width:14px;height:19.01px"></i><i class="d " style="left:480.5px;top:322.5px"></i><i class="w" style="left:483px;top:321.00px;width:14px;height:19.01px"></i><i class="d " style="left:480.5px;top:329.5px"></i><i class="w" style="left:465px;top:342.00px;width:32px;height:19.01px"></i><i class="w" style="left:465px;top:387.00px;width:77px;height:19.01px"></i><div class="fw" style="box-shadow:0 0 0 10.61px #1236cc"><div class="ft"></div><div class="ftl"></div><div class="ftr"></div><div class="fb"></div><svg class="a" style="left:5px;top:9px" width="17" height="15" viewBox="0 0 17 15"><path d="M1 5 L7 1.5 L13 3.5 L15.5 5 L15.5 8 L13 7 L7 10 L1 7.5Z" fill="#2c2c2c"/><path d="M1 5 L7 1.5 L14 4.5 L8 8Z" fill="#4c4c4c"/><path d="M1.5 7v4M3.5 8v4M5.5 9v4M7.5 10v4" stroke="#ddd" stroke-width="1.1"/><path d="M2.5 7.5v4M4.5 8.5v4M6.5 9.5v4" stroke="#222" stroke-width="0.9"/><path d="M15 6v4" stroke="#333" stroke-width="1.2"/></svg><div class="ftx">Form</div><div class="cb" style="left:242px"><i class="a" style="left:4px;top:12px;width:7px;height:3px;background:#fff"></i></div><div class="cb" style="left:265px"><i class="a" style="left:4px;top:4px;width:11px;height:11px;border:1px solid #fff;border-top-width:3px"></i></div><div class="cb x" style="left:288px"><svg class="a" style="left:0;top:0" width="19" height="19" viewBox="0 0 19 19"><path d="M5 5l9 9M14 5l-9 9" stroke="#fff" stroke-width="2.2"/></svg></div></div><div class="fc"><div class="sub"><svg class="a" style="left:129px;top:169px" width="371" height="565" viewBox="129 169 371 565"><rect x="129" y="169" width="371" height="565" fill="#fff"/><rect x="129" y="169" width="371" height="565" fill="url(#dp27)"/></svg><div class="el" style="left:452px;top:304px;width:29px;height:31px"></div><div class="tx" style="left:470.5px;top:321px;font:bold 11px 'Liberation Sans',sans-serif">T</div><i class="w" style="left:483px;top:298.48px;width:14px;height:22.05px"></i><i class="d " style="left:480.5px;top:308.5px"></i><i class="w" style="left:483px;top:305.48px;width:14px;height:22.05px"></i><i class="d " style="left:480.5px;top:315.5px"></i><i class="w" style="left:483px;top:312.48px;width:14px;height:22.05px"></i><i class="d " style="left:480.5px;top:322.5px"></i><i class="w" style="left:483px;top:319.48px;width:14px;height:22.05px"></i><i class="d " style="left:480.5px;top:329.5px"></i><i class="w" style="left:465px;top:340.48px;width:32px;height:22.05px"></i><i class="w" style="left:465px;top:385.48px;width:77px;height:22.05px"></i><div class="fw" style="box-shadow:0 0 0 11.56px #1236cc"><div class="ft"></div><div class="ftl"></div><div class="ftr"></div><div class="fb"></div><svg class="a" style="left:5px;top:9px" width="17" height="15" viewBox="0 0 17 15"><path d="M1 5 L7 1.5 L13 3.5 L15.5 5 L15.5 8 L13 7 L7 10 L1 7.5Z" fill="#2c2c2c"/><path d="M1 5 L7 1.5 L14 4.5 L8 8Z" fill="#4c4c4c"/><path d="M1.5 7v4M3.5 8v4M5.5 9v4M7.5 10v4" stroke="#ddd" stroke-width="1.1"/><path d="M2.5 7.5v4M4.5 8.5v4M6.5 9.5v4" stroke="#222" stroke-width="0.9"/><path d="M15 6v4" stroke="#333" stroke-width="1.2"/></svg><div class="ftx">Form</div><div class="cb" style="left:242px"><i class="a" style="left:4px;top:12px;width:7px;height:3px;background:#fff"></i></div><div class="cb" style="left:265px"><i class="a" style="left:4px;top:4px;width:11px;height:11px;border:1px solid #fff;border-top-width:3px"></i></div><div class="cb x" style="left:288px"><svg class="a" style="left:0;top:0" width="19" height="19" viewBox="0 0 19 19"><path d="M5 5l9 9M14 5l-9 9" stroke="#fff" stroke-width="2.2"/></svg></div></div><div class="fc"><div class="sub"><svg class="a" style="left:129px;top:169px" width="371" height="565" viewBox="129 169 371 565"><rect x="129" y="169" width="371" height="565" fill="#fff"/><rect x="129" y="169" width="371" height="565" fill="url(#dp28)"/></svg><div class="el" style="left:452px;top:304px;width:29px;height:31px"></div><div class="tx" style="left:470.5px;top:321px;font:bold 11px 'Liberation Sans',sans-serif">T</div><i class="w" style="left:483px;top:296.71px;width:14px;height:25.58px"></i><i class="d " style="left:480.5px;top:308.5px"></i><i class="w" style="left:483px;top:303.71px;width:14px;height:25.58px"></i><i class="d " style="left:480.5px;top:315.5px"></i><i class="w" style="left:483px;top:310.71px;width:14px;height:25.58px"></i><i class="d " style="left:480.5px;top:322.5px"></i><i class="w" style="left:483px;top:317.71px;width:14px;height:25.58px"></i><i class="d " style="left:480.5px;top:329.5px"></i><i class="w" style="left:465px;top:338.71px;width:32px;height:25.58px"></i><i class="w" style="left:465px;top:383.71px;width:77px;height:25.58px"></i><div class="fw" style="box-shadow:0 0 0 12.59px #1236cc"><div class="ft"></div><div class="ftl"></div><div class="ftr"></div><div class="fb"></div><svg class="a" style="left:5px;top:9px" width="17" height="15" viewBox="0 0 17 15"><path d="M1 5 L7 1.5 L13 3.5 L15.5 5 L15.5 8 L13 7 L7 10 L1 7.5Z" fill="#2c2c2c"/><path d="M1 5 L7 1.5 L14 4.5 L8 8Z" fill="#4c4c4c"/><path d="M1.5 7v4M3.5 8v4M5.5 9v4M7.5 10v4" stroke="#ddd" stroke-width="1.1"/><path d="M2.5 7.5v4M4.5 8.5v4M6.5 9.5v4" stroke="#222" stroke-width="0.9"/><path d="M15 6v4" stroke="#333" stroke-width="1.2"/></svg><div class="ftx">Form</div><div class="cb" style="left:242px"><i class="a" style="left:4px;top:12px;width:7px;height:3px;background:#fff"></i></div><div class="cb" style="left:265px"><i class="a" style="left:4px;top:4px;width:11px;height:11px;border:1px solid #fff;border-top-width:3px"></i></div><div class="cb x" style="left:288px"><svg class="a" style="left:0;top:0" width="19" height="19" viewBox="0 0 19 19"><path d="M5 5l9 9M14 5l-9 9" stroke="#fff" stroke-width="2.2"/></svg></div></div><div class="fc"><div class="sub"><svg class="a" style="left:129px;top:169px" width="371" height="565" viewBox="129 169 371 565"><rect x="129" y="169" width="371" height="565" fill="#fff"/><rect x="129" y="169" width="371" height="565" fill="url(#dp29)"/></svg><div class="el" style="left:452px;top:304px;width:29px;height:31px"></div><div class="tx" style="left:470.5px;top:321px;font:bold 11px 'Liberation Sans',sans-serif">T</div><i class="w" style="left:483px;top:294.66px;width:14px;height:29.67px"></i><i class="d " style="left:480.5px;top:308.5px"></i><i class="w" style="left:483px;top:301.66px;width:14px;height:29.67px"></i><i class="d " style="left:480.5px;top:315.5px"></i><i class="w" style="left:483px;top:308.66px;width:14px;height:29.67px"></i><i class="d " style="left:480.5px;top:322.5px"></i><i class="w" style="left:483px;top:315.66px;width:14px;height:29.67px"></i><i class="d " style="left:480.5px;top:329.5px"></i><i class="w" style="left:465px;top:336.66px;width:32px;height:29.67px"></i><i class="w" style="left:465px;top:381.66px;width:77px;height:29.67px"></i><div class="fw" style="box-shadow:0 0 0 13.70px #1236cc"><div class="ft"></div><div class="ftl"></div><div class="ftr"></div><div class="fb"></div><svg class="a" style="left:5px;top:9px" width="17" height="15" viewBox="0 0 17 15"><path d="M1 5 L7 1.5 L13 3.5 L15.5 5 L15.5 8 L13 7 L7 10 L1 7.5Z" fill="#2c2c2c"/><path d="M1 5 L7 1.5 L14 4.5 L8 8Z" fill="#4c4c4c"/><path d="M1.5 7v4M3.5 8v4M5.5 9v4M7.5 10v4" stroke="#ddd" stroke-width="1.1"/><path d="M2.5 7.5v4M4.5 8.5v4M6.5 9.5v4" stroke="#222" stroke-width="0.9"/><path d="M15 6v4" stroke="#333" stroke-width="1.2"/></svg><div class="ftx">Form</div><div class="cb" style="left:242px"><i class="a" style="left:4px;top:12px;width:7px;height:3px;background:#fff"></i></div><div class="cb" style="left:265px"><i class="a" style="left:4px;top:4px;width:11px;height:11px;border:1px solid #fff;border-top-width:3px"></i></div><div class="cb x" style="left:288px"><svg class="a" style="left:0;top:0" width="19" height="19" viewBox="0 0 19 19"><path d="M5 5l9 9M14 5l-9 9" stroke="#fff" stroke-width="2.2"/></svg></div></div><div class="fc"><div class="sub"><svg class="a" style="left:129px;top:169px" width="371" height="565" viewBox="129 169 371 565"><rect x="129" y="169" width="371" height="565" fill="#fff"/><rect x="129" y="169" width="371" height="565" fill="url(#dp30)"/></svg><div class="el" style="left:452px;top:304px;width:29px;height:31px"></div><div class="tx" style="left:470.5px;top:321px;font:bold 11px 'Liberation Sans',sans-serif">T</div><i class="w" style="left:483px;top:292.29px;width:14px;height:34.42px"></i><i class="d " style="left:480.5px;top:308.5px"></i><i class="w" style="left:483px;top:299.29px;width:14px;height:34.42px"></i><i class="d " style="left:480.5px;top:315.5px"></i><i class="w" style="left:483px;top:306.29px;width:14px;height:34.42px"></i><i class="d " style="left:480.5px;top:322.5px"></i><i class="w" style="left:483px;top:313.29px;width:14px;height:34.42px"></i><i class="d " style="left:480.5px;top:329.5px"></i><i class="w" style="left:465px;top:334.29px;width:32px;height:34.42px"></i><i class="w" style="left:465px;top:379.29px;width:77px;height:34.42px"></i><div class="fw" style="box-shadow:0 0 0 14.90px #1236cc"><div class="ft"></div><div class="ftl"></div><div class="ftr"></div><div class="fb"></div><svg class="a" style="left:5px;top:9px" width="17" height="15" viewBox="0 0 17 15"><path d="M1 5 L7 1.5 L13 3.5 L15.5 5 L15.5 8 L13 7 L7 10 L1 7.5Z" fill="#2c2c2c"/><path d="M1 5 L7 1.5 L14 4.5 L8 8Z" fill="#4c4c4c"/><path d="M1.5 7v4M3.5 8v4M5.5 9v4M7.5 10v4" stroke="#ddd" stroke-width="1.1"/><path d="M2.5 7.5v4M4.5 8.5v4M6.5 9.5v4" stroke="#222" stroke-width="0.9"/><path d="M15 6v4" stroke="#333" stroke-width="1.2"/></svg><div class="ftx">Form</div><div class="cb" style="left:242px"><i class="a" style="left:4px;top:12px;width:7px;height:3px;background:#fff"></i></div><div class="cb" style="left:265px"><i class="a" style="left:4px;top:4px;width:11px;height:11px;border:1px solid #fff;border-top-width:3px"></i></div><div class="cb x" style="left:288px"><svg class="a" style="left:0;top:0" width="19" height="19" viewBox="0 0 19 19"><path d="M5 5l9 9M14 5l-9 9" stroke="#fff" stroke-width="2.2"/></svg></div></div><div class="fc"></div></div></div></div></div></div></div></div></div></div></div></div></div></div></div></div></div></div></div></div></div></div></div></div></div></div></div></div></div></div></div></div></div></div></div></div></div></div></div></div></div></div></div></div></div></div></div></div></div></div></div></div></div></div></div></div></div></div></div></div></div><div class="a" style="left:292.5px;top:542.6px;width:22px;height:46px;background:radial-gradient(ellipse at 50% 62%,rgba(125,145,222,.95) 0,rgba(135,155,228,.8) 40%,rgba(150,170,235,0) 100%)"></div><svg class="a" style="left:300.8px;top:567.9px" width="5.500" height="5.500" viewBox="0 0 9 9"><path d="M4.500 0L6.500 2.500H5V4H6.500V2.500L9 4.500L6.500 6.500V5H5V6.500H6.500L4.500 9L2.500 6.500H4V5H2.500V6.500L0 4.500L2.500 2.500V4H4V2.500H2.500z" fill="#000" stroke="#fff" stroke-width=".25"/></svg></div></div></body></html>
